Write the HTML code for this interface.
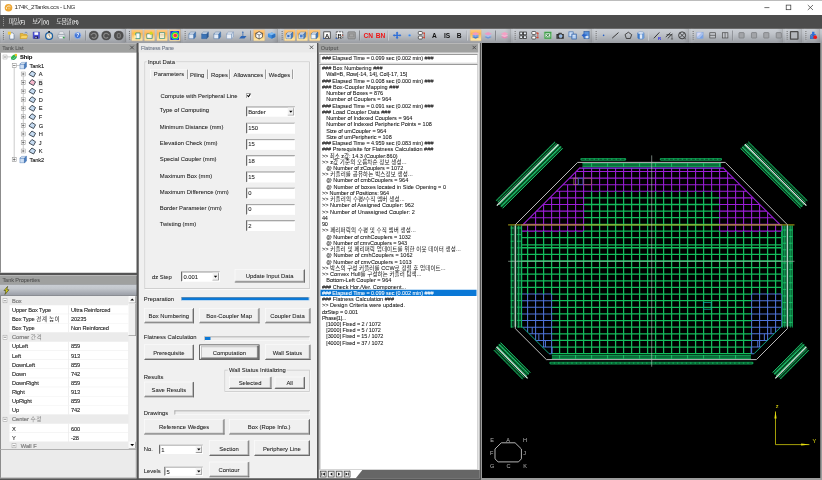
<!DOCTYPE html><html lang="ko"><head><meta charset="utf-8"><title>174K_2Tanks.ccs - LNG</title>
<style>html,body{width:822px;height:480px;overflow:hidden;background:#f0f0f0}
#sc{left:0;top:0;width:3288px;height:1920px;transform:scale(0.25);transform-origin:0 0;isolation:isolate;filter:grayscale(0)}

*{box-sizing:border-box;margin:0;padding:0}
#zm{left:0;top:0;width:3288px;height:1920px;overflow:hidden}
body{position:relative;-webkit-text-stroke:0.24px;font-family:"Liberation Sans","Noto Sans CJK KR",sans-serif;font-size:23.6px;color:#000}
div,svg,button,input{position:absolute}
button,input{font-family:inherit;margin:0;padding:0;border-radius:0;outline:0;-webkit-appearance:none;appearance:none;display:block;-webkit-text-stroke:inherit}
.t{white-space:pre;overflow:visible}
.k{font-size:1em;font-weight:400;-webkit-text-stroke:0}
.s .k{letter-spacing:1.8px}
.f{font-size:23.48px;color:#1a1a1a}
.o{font-size:22px;color:#111;letter-spacing:-0.4px}
.s{font-size:22.8px;color:#1a1a1a;letter-spacing:-0.48px;-webkit-text-stroke:0.4px}
.btn{padding-top:3.6px;background:#f0f0f0;border:2.4px solid #fff;border-right:4px solid #6c6c6c;border-bottom:4px solid #6c6c6c;box-shadow:inset -2.8px -2.8px 0 #a6a6a6;text-align:center;font-size:23.48px;color:#1a1a1a;white-space:pre}
.inp{background:#fff;border:2.8px solid #fff;border-top:3.6px solid #8a8a8a;border-left:4px solid #6a6a6a;box-shadow:inset 2.4px 2.4px 0 #c8c8c8;font-size:23.48px;color:#1a1a1a;white-space:pre;padding-left:5.2px}
.h{font-size:22px;color:#505050}
.hdr{background:#9fa09f;color:#505050;font-size:21.6px;white-space:pre;padding-left:5.2px}
</style></head><body><div id="sc"><div id="zm">
<div  style="left:0px;top:0px;width:3288px;height:60px;background:#fff;border-top:3.6px solid #a6a6a6;border-left:3.6px solid #9a9aa2;"></div>
<svg style="left:16px;top:12.8px" width="36" height="36" viewBox="0 0 9 9"><circle cx="4.5" cy="4.5" r="3.8" fill="#eda634"/><path d="M6.5 3.5A2.3 2.3 0 0 0 2.6 5.8" fill="none" stroke="#fff3dc" stroke-width=".9"/><circle cx="5" cy="5.3" r="1.1" fill="#f4c060"/></svg>
<div class="t" style="left:58.4px;top:8.4px;height:40px;line-height:40px;font-size:24.8px;color:#2c2c2c;letter-spacing:-1.2px;-webkit-text-stroke:0">174K_2Tanks.ccs - LNG</div>
<svg style="left:3040px;top:0" width="248" height="60" viewBox="0 0 62 15"><path d="M4.4 7.6h5" stroke="#333" stroke-width=".7" fill="none"/><rect x="26.2" y="5.1" width="4.6" height="4.6" fill="none" stroke="#333" stroke-width=".7"/><path d="M47.8 5l5.2 5M53 5l-5.2 5" stroke="#333" stroke-width=".7" fill="none"/></svg>
<div  style="left:0px;top:60px;width:3288px;height:52px;background:#4c4c4c"></div>
<svg style="left:8px;top:68px" width="12" height="40" viewBox="0 0 3 10"><path d="M1.5 0.3v9.6" stroke="#bdbdbd" stroke-width=".9" stroke-dasharray=".8 1.2"/></svg>
<div class="t" style="left:34px;top:65.6px;height:40px;line-height:40px;font-size:25.2px;color:#fff;letter-spacing:-3px"><span style="font-weight:300">파일</span><span style="font-size:18.8px;letter-spacing:-0.2px;margin-left:2.8px">(F)</span></div>
<div class="t" style="left:128.8px;top:65.6px;height:40px;line-height:40px;font-size:25.2px;color:#fff;letter-spacing:-3px"><span style="font-weight:300">보기</span><span style="font-size:18.8px;letter-spacing:-0.2px;margin-left:2.8px">(V)</span></div>
<div class="t" style="left:224.8px;top:65.6px;height:40px;line-height:40px;font-size:25.2px;color:#fff;letter-spacing:-3px"><span style="font-weight:300">도움말</span><span style="font-size:18.8px;letter-spacing:-0.2px;margin-left:2.8px">(H)</span></div>
<div  style="left:0px;top:112px;width:3288px;height:60px;background:linear-gradient(#c9cdd3 0%,#c2c6cc 30%,#a9adb3 75%,#9a9da3 100%);border-top:4px solid #6b6b6b"></div>
<div  style="left:4px;top:113.2px;width:500px;height:57.6px;border-radius:0 6px 6px 0;background:linear-gradient(90deg,rgba(255,255,255,.10) 0,rgba(255,255,255,0) 16px,rgba(0,0,0,0) calc(100% - 20px),rgba(0,0,0,.10) 100%);border-right:4px solid rgba(80,80,80,.35)"></div>
<svg style="left:9.2px;top:122px" width="12" height="40" viewBox="0 0 3 10"><path d="M1.2 .5v9" stroke="#666" stroke-width="1" stroke-dasharray="1 1.1"/><path d="M2 1v9" stroke="#e8e8e8" stroke-width=".6" stroke-dasharray="1 1.1" opacity=".7"/></svg>
<div  style="left:508px;top:113.2px;width:217.6px;height:57.6px;border-radius:0 6px 6px 0;background:linear-gradient(90deg,rgba(255,255,255,.10) 0,rgba(255,255,255,0) 16px,rgba(0,0,0,0) calc(100% - 20px),rgba(0,0,0,.10) 100%);border-right:4px solid rgba(80,80,80,.35)"></div>
<svg style="left:513.2px;top:122px" width="12" height="40" viewBox="0 0 3 10"><path d="M1.2 .5v9" stroke="#666" stroke-width="1" stroke-dasharray="1 1.1"/><path d="M2 1v9" stroke="#e8e8e8" stroke-width=".6" stroke-dasharray="1 1.1" opacity=".7"/></svg>
<div  style="left:730.4px;top:113.2px;width:382.8px;height:57.6px;border-radius:0 6px 6px 0;background:linear-gradient(90deg,rgba(255,255,255,.10) 0,rgba(255,255,255,0) 16px,rgba(0,0,0,0) calc(100% - 20px),rgba(0,0,0,.10) 100%);border-right:4px solid rgba(80,80,80,.35)"></div>
<svg style="left:735.6px;top:122px" width="12" height="40" viewBox="0 0 3 10"><path d="M1.2 .5v9" stroke="#666" stroke-width="1" stroke-dasharray="1 1.1"/><path d="M2 1v9" stroke="#e8e8e8" stroke-width=".6" stroke-dasharray="1 1.1" opacity=".7"/></svg>
<div  style="left:1118.4px;top:113.2px;width:927.2px;height:57.6px;border-radius:0 6px 6px 0;background:linear-gradient(90deg,rgba(255,255,255,.10) 0,rgba(255,255,255,0) 16px,rgba(0,0,0,0) calc(100% - 20px),rgba(0,0,0,.10) 100%);border-right:4px solid rgba(80,80,80,.35)"></div>
<svg style="left:1123.6px;top:122px" width="12" height="40" viewBox="0 0 3 10"><path d="M1.2 .5v9" stroke="#666" stroke-width="1" stroke-dasharray="1 1.1"/><path d="M2 1v9" stroke="#e8e8e8" stroke-width=".6" stroke-dasharray="1 1.1" opacity=".7"/></svg>
<div  style="left:2050.4px;top:113.2px;width:319.2px;height:57.6px;border-radius:0 6px 6px 0;background:linear-gradient(90deg,rgba(255,255,255,.10) 0,rgba(255,255,255,0) 16px,rgba(0,0,0,0) calc(100% - 20px),rgba(0,0,0,.10) 100%);border-right:4px solid rgba(80,80,80,.35)"></div>
<svg style="left:2055.6px;top:122px" width="12" height="40" viewBox="0 0 3 10"><path d="M1.2 .5v9" stroke="#666" stroke-width="1" stroke-dasharray="1 1.1"/><path d="M2 1v9" stroke="#e8e8e8" stroke-width=".6" stroke-dasharray="1 1.1" opacity=".7"/></svg>
<div  style="left:2374.4px;top:113.2px;width:383.2px;height:57.6px;border-radius:0 6px 6px 0;background:linear-gradient(90deg,rgba(255,255,255,.10) 0,rgba(255,255,255,0) 16px,rgba(0,0,0,0) calc(100% - 20px),rgba(0,0,0,.10) 100%);border-right:4px solid rgba(80,80,80,.35)"></div>
<svg style="left:2379.6px;top:122px" width="12" height="40" viewBox="0 0 3 10"><path d="M1.2 .5v9" stroke="#666" stroke-width="1" stroke-dasharray="1 1.1"/><path d="M2 1v9" stroke="#e8e8e8" stroke-width=".6" stroke-dasharray="1 1.1" opacity=".7"/></svg>
<div  style="left:2762.4px;top:113.2px;width:372px;height:57.6px;border-radius:0 6px 6px 0;background:linear-gradient(90deg,rgba(255,255,255,.10) 0,rgba(255,255,255,0) 16px,rgba(0,0,0,0) calc(100% - 20px),rgba(0,0,0,.10) 100%);border-right:4px solid rgba(80,80,80,.35)"></div>
<svg style="left:2767.6px;top:122px" width="12" height="40" viewBox="0 0 3 10"><path d="M1.2 .5v9" stroke="#666" stroke-width="1" stroke-dasharray="1 1.1"/><path d="M2 1v9" stroke="#e8e8e8" stroke-width=".6" stroke-dasharray="1 1.1" opacity=".7"/></svg>
<div  style="left:3138.4px;top:113.2px;width:71.2px;height:57.6px;border-radius:0 6px 6px 0;background:linear-gradient(90deg,rgba(255,255,255,.10) 0,rgba(255,255,255,0) 16px,rgba(0,0,0,0) calc(100% - 20px),rgba(0,0,0,.10) 100%);border-right:4px solid rgba(80,80,80,.35)"></div>
<svg style="left:3143.6px;top:122px" width="12" height="40" viewBox="0 0 3 10"><path d="M1.2 .5v9" stroke="#666" stroke-width="1" stroke-dasharray="1 1.1"/><path d="M2 1v9" stroke="#e8e8e8" stroke-width=".6" stroke-dasharray="1 1.1" opacity=".7"/></svg>
<div  style="left:3213.6px;top:113.2px;width:68.8px;height:57.6px;border-radius:0 6px 6px 0;background:linear-gradient(90deg,rgba(255,255,255,.10) 0,rgba(255,255,255,0) 16px,rgba(0,0,0,0) calc(100% - 20px),rgba(0,0,0,.10) 100%);border-right:4px solid rgba(80,80,80,.35)"></div>
<svg style="left:3218.8px;top:122px" width="12" height="40" viewBox="0 0 3 10"><path d="M1.2 .5v9" stroke="#666" stroke-width="1" stroke-dasharray="1 1.1"/><path d="M2 1v9" stroke="#e8e8e8" stroke-width=".6" stroke-dasharray="1 1.1" opacity=".7"/></svg>
<svg style="left:27.6px;top:123.6px" width="36" height="36" viewBox="0 0 10 10"><path d="M3 2h3.2l1.6 1.6V9H3z" fill="#f4f7fb" stroke="#5a7190" stroke-width=".7"/><rect x="1" y="0.8" width="3.4" height="3.2" fill="#f3c93a"/></svg>
<svg style="left:76.8px;top:123.2px" width="36.8" height="36.8" viewBox="0 0 10 10"><path d="M1 3h3l.8.9H8V8.4H1z" fill="#e9b93a" stroke="#b98a1b" stroke-width=".5"/><path d="M1 8.4l1.4-3.2h7L8 8.4z" fill="#f8d566" stroke="#c39322" stroke-width=".4"/><path d="M6 2.2c1.3-.9 2.4-.5 2.8.6" fill="none" stroke="#4c78b8" stroke-width=".8"/></svg>
<svg style="left:128.4px;top:124.4px" width="34.4" height="34.4" viewBox="0 0 10 10"><rect x="1.2" y="1.2" width="7.6" height="7.6" fill="#4a50d4" stroke="#3a3ea8" stroke-width=".5"/><rect x="2.8" y="1.5" width="4.4" height="3" fill="#fff"/><rect x="3" y="6.2" width="4" height="2.6" fill="#1c1c50"/><rect x="4" y="6.8" width="1.3" height="1.6" fill="#dfe4f5"/></svg>
<svg style="left:178px;top:123.2px" width="36.8" height="36.8" viewBox="0 0 10 10"><circle cx="5" cy="5.7" r="3.7" fill="#fff" stroke="#1f5f9e" stroke-width="1.5"/><rect x="4" y="0.3" width="2" height="1.6" fill="#222"/><path d="M5 5.7V3.6M5 5.7l1.4 1" stroke="#333" stroke-width=".6" fill="none"/><circle cx="5" cy="5.7" r="2.2" fill="none" stroke="#d8a23a" stroke-width=".4"/></svg>
<svg style="left:226.8px;top:123.2px" width="36.8" height="36.8" viewBox="0 0 10 10"><path d="M3 1.4h4.2l.8 2.2H2.2z" fill="#fff" stroke="#8a93a2" stroke-width=".5"/><path d="M1.2 4h7.6v3.6H1.2z" fill="#d9dde4" stroke="#7c8695" stroke-width=".5"/><path d="M2.4 6.4h5.2v2.2H2.4z" fill="#f6f7f9" stroke="#8a93a2" stroke-width=".4"/><rect x="6.6" y="6.6" width="1.8" height="1.6" fill="#2eae3e"/></svg>
<div  style="left:276.4px;top:122px;width:4.4px;height:40px;background:linear-gradient(90deg,#85888d 50%,#c9ccd1 50%)"></div>
<svg style="left:293.6px;top:124.8px" width="33.6" height="33.6" viewBox="0 0 10 10"><circle cx="5" cy="5" r="3.9" fill="#3f74d6" stroke="#a9c3f0" stroke-width=".8"/><text x="5" y="7.2" font-family="Liberation Sans,sans-serif" font-size="6" font-weight="bold" fill="#fff" text-anchor="middle">?</text></svg>
<div  style="left:340.8px;top:122px;width:4.4px;height:40px;background:linear-gradient(90deg,#85888d 50%,#c9ccd1 50%)"></div>
<svg style="left:354.8px;top:121.6px" width="40" height="40" viewBox="0 0 10 10"><circle cx="5" cy="5" r="4.6" fill="#505050" stroke="#3a3a3a" stroke-width=".5"/><path d="M3.2 6.6A2.4 2.4 0 1 0 3.4 3.6" fill="none" stroke="#8c8c8c" stroke-width="1.1"/><path d="M2.2 3l1.6 1.6-2 .4z" fill="#8c8c8c"/></svg>
<svg style="left:404.8px;top:121.6px" width="40" height="40" viewBox="0 0 10 10"><circle cx="5" cy="5" r="4.6" fill="#505050" stroke="#3a3a3a" stroke-width=".5"/><path d="M6.8 6.6A2.4 2.4 0 1 1 6.6 3.6" fill="none" stroke="#8c8c8c" stroke-width="1.1"/><path d="M7.8 3l-1.6 1.6 2 .4z" fill="#8c8c8c"/></svg>
<svg style="left:454.8px;top:121.6px" width="40" height="40" viewBox="0 0 10 10"><circle cx="5" cy="5" r="4.6" fill="#505050" stroke="#3a3a3a" stroke-width=".5"/><rect x="3.5" y="3.2" width="3" height="4" rx=".6" fill="none" stroke="#8c8c8c" stroke-width=".9"/></svg>
<div  style="left:525.2px;top:118px;width:46.4px;height:46px;background:linear-gradient(#fdcd88 0%,#fcb555 36%,#fed27c 66%,#ffedb2 100%);border:1.6px solid #e8b060;border-radius:3.2px"></div>
<svg style="left:530px;top:123.2px" width="36.8" height="36.8" viewBox="0 0 10 10"><rect x="1.4" y="1.2" width="3" height="2.6" fill="#f6cf3c"/><path d="M3.6 2.4h4.6v6.2H3.6z" fill="#f7faf8" stroke="#2f8a78" stroke-width=".9"/><rect x="1.8" y="5" width="2" height="3" fill="#fbe9a0"/></svg>
<div  style="left:576px;top:118px;width:44.4px;height:46px;background:linear-gradient(#fdcd88 0%,#fcb555 36%,#fed27c 66%,#ffedb2 100%);border:1.6px solid #e8b060;border-radius:3.2px"></div>
<svg style="left:579.8px;top:123.2px" width="36.8" height="36.8" viewBox="0 0 10 10"><path d="M2 3.4h5.8v5H2z" fill="#fbeedd" stroke="#2f8a78" stroke-width=".8"/><circle cx="6.6" cy="2.6" r="1.7" fill="#d8d820"/><path d="M2.6 4h2.6v3.2H2.6z" fill="#fff"/></svg>
<div  style="left:625.6px;top:118px;width:45.2px;height:46px;background:linear-gradient(#fdcd88 0%,#fcb555 36%,#fed27c 66%,#ffedb2 100%);border:1.6px solid #e8b060;border-radius:3.2px"></div>
<svg style="left:629.8px;top:123.2px" width="36.8" height="36.8" viewBox="0 0 10 10"><path d="M2.2 2h5.6v6.4H2.2z" fill="#fdf3dc" stroke="#3d8f7c" stroke-width=".8"/><path d="M3 4h4M3 5.6h4" stroke="#c7b27a" stroke-width=".5"/></svg>
<div  style="left:676px;top:118px;width:46px;height:46px;background:linear-gradient(#fdcd88 0%,#fcb555 36%,#fed27c 66%,#ffedb2 100%);border:1.6px solid #e8b060;border-radius:3.2px"></div>
<svg style="left:679px;top:121.6px" width="40" height="40" viewBox="0 0 10 10"><rect x=".6" y=".6" width="8.8" height="8.8" fill="#1a2ad8"/><circle cx="5.3" cy="5" r="4.3" fill="#18b4e8"/><circle cx="5.3" cy="5" r="3.5" fill="#22d33a"/><circle cx="5.4" cy="5" r="2.6" fill="#f4e420"/><circle cx="5.5" cy="5" r="1.8" fill="#f0286a"/></svg>
<svg style="left:751.2px;top:123.2px" width="36.8" height="36.8" viewBox="0 0 10 10"><path d="M1.2 3.4h5.4v5.2H1.2z" fill="#dfe9f6" stroke="#3a669c" stroke-width=".5"/><path d="M1.2 3.4l2-1.9h5.4l-2 1.9z" fill="#eef4fb" stroke="#3a669c" stroke-width=".5"/><path d="M6.6 3.4l2-1.9v5.2l-2 1.9z" fill="#3f78bc" stroke="#3a669c" stroke-width=".5"/></svg>
<svg style="left:801.6px;top:123.2px" width="36.8" height="36.8" viewBox="0 0 10 10"><path d="M1.2 3.4h5.4v5.2H1.2z" fill="#3c74b8" stroke="#3a669c" stroke-width=".5"/><path d="M1.2 3.4l2-1.9h5.4l-2 1.9z" fill="#e8f0fa" stroke="#3a669c" stroke-width=".5"/><path d="M6.6 3.4l2-1.9v5.2l-2 1.9z" fill="#2a5a98" stroke="#3a669c" stroke-width=".5"/></svg>
<svg style="left:851.2px;top:123.2px" width="36.8" height="36.8" viewBox="0 0 10 10"><path d="M1.2 3.4h5.4v5.2H1.2z" fill="#e4ecf7" stroke="#3a669c" stroke-width=".5"/><path d="M1.2 3.4l2-1.9h5.4l-2 1.9z" fill="#f4f8fc" stroke="#3a669c" stroke-width=".5"/><path d="M6.6 3.4l2-1.9v5.2l-2 1.9z" fill="#3f78bc" stroke="#3a669c" stroke-width=".5"/></svg>
<svg style="left:901.6px;top:123.2px" width="36.8" height="36.8" viewBox="0 0 10 10"><path d="M1.2 3.4h5.4v5.2H1.2z" fill="#eef3fa" stroke="#6b8ab4" stroke-width=".5"/><path d="M1.2 3.4l2-1.9h5.4l-2 1.9z" fill="#f7fafd" stroke="#6b8ab4" stroke-width=".5"/><path d="M6.6 3.4l2-1.9v5.2l-2 1.9z" fill="#d2dff0" stroke="#6b8ab4" stroke-width=".5"/></svg>
<svg style="left:952.8px;top:123.2px" width="36.8" height="36.8" viewBox="0 0 10 10"><path d="M1 8.4l2.2-2.6h5.8L6.8 8.4z" fill="#2f66b4"/><path d="M5 6.6V1" stroke="#2f66b4" stroke-width=".8"/><path d="M4.2 2.2L5 .6l.8 1.6z" fill="#2f66b4"/></svg>
<div  style="left:1000.4px;top:122px;width:4.4px;height:40px;background:linear-gradient(90deg,#85888d 50%,#c9ccd1 50%)"></div>
<div  style="left:1013.2px;top:118px;width:46.8px;height:46px;background:linear-gradient(#fdcd88 0%,#fcb555 36%,#fed27c 66%,#ffedb2 100%);border:1.6px solid #e8b060;border-radius:3.2px"></div>
<svg style="left:1018.4px;top:123.2px" width="36.8" height="36.8" viewBox="0 0 10 10"><path d="M5 1l3.6 1.8v4.2L5 9 1.4 7V2.8z" fill="#fff" stroke="#222" stroke-width=".7"/><path d="M1.4 2.8L5 4.6l3.6-1.8M5 4.6V9" fill="none" stroke="#222" stroke-width=".6"/></svg>
<svg style="left:1068px;top:123.2px" width="36.8" height="36.8" viewBox="0 0 10 10"><path d="M1 3.2l4.4-1.4 3.6 1.4v3.6L5 8.6 1 6.8z" fill="#3f8fe0"/><path d="M1 3.2l4 1.6 4-1.6-3.6-1.4z" fill="#7fbaf2"/><path d="M5 4.8v3.8l4-1.8V3.2z" fill="#2a6fc0"/></svg>
<div  style="left:1136px;top:118px;width:45.2px;height:46px;background:linear-gradient(#fdcd88 0%,#fcb555 36%,#fed27c 66%,#ffedb2 100%);border:1.6px solid #e8b060;border-radius:3.2px"></div>
<svg style="left:1140.2px;top:123.2px" width="36.8" height="36.8" viewBox="0 0 10 10"><path d="M1.2 3.4h5.4v5.2H1.2z" fill="#f2f6fb" stroke="#3a669c" stroke-width=".5"/><path d="M1.2 3.4l2-1.9h5.4l-2 1.9z" fill="#f9fbfe" stroke="#3a669c" stroke-width=".5"/><path d="M6.6 3.4l2-1.9v5.2l-2 1.9z" fill="#4a7fc0" stroke="#3a669c" stroke-width=".5"/><rect x="2.4" y="4.6" width="2.6" height="2.6" fill="#3b6fc0"/></svg>
<div  style="left:1186.4px;top:118px;width:45.6px;height:46px;background:linear-gradient(#fdcd88 0%,#fcb555 36%,#fed27c 66%,#ffedb2 100%);border:1.6px solid #e8b060;border-radius:3.2px"></div>
<svg style="left:1190.8px;top:123.2px" width="36.8" height="36.8" viewBox="0 0 10 10"><path d="M1.2 3.4h5.4v5.2H1.2z" fill="#f2f6fb" stroke="#3a669c" stroke-width=".5"/><path d="M1.2 3.4l2-1.9h5.4l-2 1.9z" fill="#f9fbfe" stroke="#3a669c" stroke-width=".5"/><path d="M6.6 3.4l2-1.9v5.2l-2 1.9z" fill="#4a7fc0" stroke="#3a669c" stroke-width=".5"/><path d="M2.4 4.4h3v3h-3z" fill="#4a7fd0"/></svg>
<div  style="left:1235.6px;top:118px;width:45.2px;height:46px;background:linear-gradient(#fdcd88 0%,#fcb555 36%,#fed27c 66%,#ffedb2 100%);border:1.6px solid #e8b060;border-radius:3.2px"></div>
<svg style="left:1239.8px;top:123.2px" width="36.8" height="36.8" viewBox="0 0 10 10"><path d="M1.2 3.4h5.4v5.2H1.2z" fill="#f2f6fb" stroke="#3a669c" stroke-width=".5"/><path d="M1.2 3.4l2-1.9h5.4l-2 1.9z" fill="#f9fbfe" stroke="#3a669c" stroke-width=".5"/><path d="M6.6 3.4l2-1.9v5.2l-2 1.9z" fill="#3f78bc" stroke="#3a669c" stroke-width=".5"/></svg>
<svg style="left:1289.6px;top:123.2px" width="36.8" height="36.8" viewBox="0 0 10 10"><rect x="1.4" y="1.2" width="7" height="7" fill="#fff" stroke="#2b2b2b" stroke-width=".8"/><text x="4.9" y="7.4" font-family="Liberation Sans,sans-serif" font-size="6.4" font-weight="bold" fill="#111" text-anchor="middle">A</text><circle cx="1.4" cy="8.4" r=".8" fill="#2a62c8"/></svg>
<svg style="left:1339.6px;top:123.2px" width="36.8" height="36.8" viewBox="0 0 10 10"><rect x="1.4" y="1.2" width="7" height="7" fill="#fff" stroke="#2b2b2b" stroke-width=".8" stroke-dasharray="2 1"/><text x="4.9" y="7.4" font-family="Liberation Sans,sans-serif" font-size="6.4" font-weight="bold" fill="#111" text-anchor="middle">B</text><circle cx="1.4" cy="8.4" r=".8" fill="#2a62c8"/><circle cx="8.4" cy="5" r=".7" fill="#c8442a"/></svg>
<svg style="left:1387.6px;top:123.2px" width="36.8" height="36.8" viewBox="0 0 10 10"><rect x="1" y="1.2" width="8" height="7.6" rx=".8" fill="#a6a6a6" stroke="#6a6a6a" stroke-width=".7"/><path d="M2.6 3.4h4.8v3.2H2.6z" fill="none" stroke="#7d7d7d" stroke-width=".6"/></svg>
<div  style="left:1436.4px;top:122px;width:4.4px;height:40px;background:linear-gradient(90deg,#85888d 50%,#c9ccd1 50%)"></div>
<svg style="left:1452.8px;top:121.6px" width="40" height="40" viewBox="0 0 10 10"><text x="5" y="7.3" font-family="Liberation Sans,sans-serif" font-size="6.6" font-weight="bold" fill="#f01414" text-anchor="middle">CN</text></svg>
<svg style="left:1502.4px;top:121.6px" width="40" height="40" viewBox="0 0 10 10"><text x="5" y="7.3" font-family="Liberation Sans,sans-serif" font-size="6.6" font-weight="bold" fill="#f01414" text-anchor="middle">BN</text></svg>
<div  style="left:1551.2px;top:122px;width:4.4px;height:40px;background:linear-gradient(90deg,#85888d 50%,#c9ccd1 50%)"></div>
<svg style="left:1569.6px;top:123.2px" width="36.8" height="36.8" viewBox="0 0 10 10"><path d="M5 .8l1.6 2H5.8v1.6h2V3.4l2 1.6-2 1.6V5.6h-2v1.6h.8L5 9.2 3.4 7.2h.8V5.6h-2v1L.2 5l2-1.6v1h2V2.8h-.8z" fill="#2f6fd8"/></svg>
<svg style="left:1620px;top:123.2px" width="36.8" height="36.8" viewBox="0 0 10 10"><circle cx="5" cy="5" r="1.3" fill="#3b86e6" stroke="#9cc2f2" stroke-width=".5"/></svg>
<svg style="left:1668.4px;top:123.2px" width="36.8" height="36.8" viewBox="0 0 10 10"><rect x="1.4" y=".8" width="4.4" height="3.2" rx="1" fill="#fff" stroke="#333" stroke-width=".8"/><rect x="1.4" y="5.8" width="4.4" height="3.2" rx="1" fill="#fff" stroke="#333" stroke-width=".8"/><path d="M6 2.4h2v5H6" fill="none" stroke="#c83a2a" stroke-width=".8"/><circle cx="8" cy="2.6" r=".8" fill="#d8402a"/><circle cx="8" cy="7.6" r=".8" fill="#d8402a"/></svg>
<svg style="left:1718px;top:121.6px" width="40" height="40" viewBox="0 0 10 10"><text x="5" y="7.3" font-family="Liberation Sans,sans-serif" font-size="6.6" font-weight="bold" fill="#111" text-anchor="middle">A</text></svg>
<svg style="left:1767.6px;top:121.6px" width="40" height="40" viewBox="0 0 10 10"><text x="5" y="7.3" font-family="Liberation Sans,sans-serif" font-size="6.6" font-weight="bold" fill="#111" text-anchor="middle">IS</text></svg>
<svg style="left:1816.8px;top:121.6px" width="40" height="40" viewBox="0 0 10 10"><text x="5" y="7.3" font-family="Liberation Sans,sans-serif" font-size="6.6" font-weight="bold" fill="#111" text-anchor="middle">B</text></svg>
<div  style="left:1867.2px;top:122px;width:4.4px;height:40px;background:linear-gradient(90deg,#85888d 50%,#c9ccd1 50%)"></div>
<div  style="left:1879.6px;top:118px;width:46px;height:46px;background:linear-gradient(#fdcd88 0%,#fcb555 36%,#fed27c 66%,#ffedb2 100%);border:1.6px solid #e8b060;border-radius:3.2px"></div>
<svg style="left:1884px;top:123.2px" width="36.8" height="36.8" viewBox="0 0 10 10"><path d="M5 5.2l4 1.7-4 1.9-4-1.9z" fill="#4a80d0"/><path d="M5 3.4l4 1.7-4 1.9-4-1.9z" fill="#7aa6e8"/><path d="M5 1.4l4 1.8-4 1.9-4-1.9z" fill="#f29ac0"/></svg>
<svg style="left:1933.6px;top:123.2px" width="36.8" height="36.8" viewBox="0 0 10 10"><path d="M5 5.2l4 1.7-4 1.9-4-1.9z" fill="#6c96d8"/><path d="M5 3.4l4 1.7-4 1.9-4-1.9z" fill="#a8c0ea"/><path d="M5 1.4l4 1.8-4 1.9-4-1.9z" fill="#ee9ac4"/></svg>
<div  style="left:1980.4px;top:122px;width:4.4px;height:40px;background:linear-gradient(90deg,#85888d 50%,#c9ccd1 50%)"></div>
<svg style="left:1999.6px;top:123.2px" width="36.8" height="36.8" viewBox="0 0 10 10"><path d="M5 5.2l4 1.7-4 1.9-4-1.9z" fill="#e888b4"/><path d="M5 3.4l4 1.7-4 1.9-4-1.9z" fill="#f0b8d4"/><path d="M5 1.4l4 1.8-4 1.9-4-1.9z" fill="#f4a0c4"/></svg>
<svg style="left:2074.8px;top:124.4px" width="34.4" height="34.4" viewBox="0 0 10 10"><g fill="#eef4fb" stroke="#2a2a2a" stroke-width=".9"><rect x="1.2" y="1.2" width="3.2" height="3.2"/><rect x="5.6" y="1.2" width="3.2" height="3.2"/><rect x="1.2" y="5.6" width="3.2" height="3.2"/><rect x="5.6" y="5.6" width="3.2" height="3.2"/></g></svg>
<svg style="left:2121.6px;top:123.2px" width="36.8" height="36.8" viewBox="0 0 10 10"><rect x="1.4" y=".8" width="4.4" height="3.2" rx="1" fill="#fff" stroke="#333" stroke-width=".8"/><rect x="1.4" y="5.8" width="4.4" height="3.2" rx="1" fill="#fff" stroke="#333" stroke-width=".8"/><path d="M6 2.4h2v5H6" fill="none" stroke="#c83a2a" stroke-width=".8"/><circle cx="8" cy="2.6" r=".8" fill="#d8402a"/><circle cx="8" cy="7.6" r=".8" fill="#d8402a"/></svg>
<svg style="left:2172.8px;top:123.2px" width="36.8" height="36.8" viewBox="0 0 10 10"><rect x="1" y="1" width="8" height="8" rx=".6" fill="#3a9a44" stroke="#9ed0a2" stroke-width=".6"/><rect x="2.4" y="2.8" width="5.2" height="4.4" fill="#e9f5ea"/><path d="M3.4 3.4l3.2 3.2M6.6 3.4L3.4 6.6" stroke="#1f6e2a" stroke-width="1"/></svg>
<svg style="left:2221.6px;top:123.2px" width="36.8" height="36.8" viewBox="0 0 10 10"><path d="M1 3.6h8v5H1z" fill="#2b2b2b"/><path d="M3.4 2.2h3.2l.6 1.4H2.8z" fill="#444"/><circle cx="5.6" cy="5.8" r="1.8" fill="#8fb6e6" stroke="#cfe0f5" stroke-width=".5"/><path d="M1.8 5v3" stroke="#777" stroke-width=".6"/></svg>
<svg style="left:2272px;top:123.2px" width="36.8" height="36.8" viewBox="0 0 10 10"><rect x="1" y="1.2" width="4.6" height="5.4" fill="#cfe0f6" stroke="#3468b0" stroke-width=".7"/><rect x="4.2" y="3.6" width="4.8" height="5.4" fill="#9fc0ea" stroke="#2a5aa0" stroke-width=".7"/><path d="M5.2 5.2h2.8M5.2 6.8h2.8" stroke="#fff" stroke-width=".6"/></svg>
<svg style="left:2324.4px;top:123.2px" width="36.8" height="36.8" viewBox="0 0 10 10"><rect x="3.2" y="1" width="5.6" height="7.6" fill="#5c94dc" stroke="#2a5aa0" stroke-width=".7"/><path d="M.6 5l3-2.4v1.6h2.6v1.8H3.6v1.6z" fill="#2a62c8"/><rect x="5" y="5.6" width="3" height="2.6" fill="#dbe8f8"/></svg>
<svg style="left:2395.6px;top:123.2px" width="36.8" height="36.8" viewBox="0 0 10 10"><circle cx="5" cy="5" r=".9" fill="#1c5cc8"/></svg>
<svg style="left:2443.2px;top:123.2px" width="36.8" height="36.8" viewBox="0 0 10 10"><path d="M1.6 8l6.8-6" stroke="#2b2b2b" stroke-width="1"/></svg>
<svg style="left:2495.2px;top:123.2px" width="36.8" height="36.8" viewBox="0 0 10 10"><path d="M5 1.6l3.6 2.6-1.4 4.2H2.8L1.4 4.2z" fill="none" stroke="#2b2b2b" stroke-width=".9"/></svg>
<svg style="left:2544.8px;top:123.2px" width="36.8" height="36.8" viewBox="0 0 10 10"><path d="M1.6 2.4v5.4c0 1.6 6.8 1.6 6.8 0V2.4z" fill="#dfeaf8" stroke="#3a70b8" stroke-width=".6"/><path d="M1.6 2.4v5.4c.4 1 1.6 1.2 2.2 1.2V3.2z" fill="#3b78c8"/><path d="M8.4 2.4v5.4c-.4 1-1.4 1.2-2 1.2V3.2z" fill="#6a9ad8"/><ellipse cx="5" cy="2.4" rx="3.4" ry="1.2" fill="#f2f6fc" stroke="#3a70b8" stroke-width=".5"/></svg>
<div  style="left:2592px;top:122px;width:4.4px;height:40px;background:linear-gradient(90deg,#85888d 50%,#c9ccd1 50%)"></div>
<svg style="left:2610.8px;top:123.2px" width="36.8" height="36.8" viewBox="0 0 10 10"><path d="M1.2 8.2l6-6.4" stroke="#2b2b2b" stroke-width="1"/><text x="7.4" y="9.6" font-family="Liberation Sans,sans-serif" font-size="4.6" font-weight="bold" fill="#2a2af0" text-anchor="middle">R</text></svg>
<svg style="left:2660px;top:123.2px" width="36.8" height="36.8" viewBox="0 0 10 10"><path d="M.8 7l5-5M3 8.4l5-5M1.6 4.4h6.4" stroke="#2b2b2b" stroke-width=".9" fill="none"/><path d="M7.6 5v4M6.4 9h2.4" stroke="#444" stroke-width=".7"/></svg>
<svg style="left:2709.6px;top:123.2px" width="36.8" height="36.8" viewBox="0 0 10 10"><circle cx="5" cy="5" r="3.8" fill="none" stroke="#333" stroke-width="1"/><path d="M2.4 2.4l5.2 5.2M7.6 2.4L2.4 7.6" stroke="#333" stroke-width=".9"/><circle cx="8.4" cy="8.6" r=".7" fill="#555"/></svg>
<svg style="left:2782.8px;top:124.4px" width="34.4" height="34.4" viewBox="0 0 10 10"><rect x="1.4" y="1.4" width="7.2" height="7.2" fill="#a9c2ee" stroke="#7fa0d8" stroke-width=".6"/><path d="M1.7 1.7h5.2L1.7 6.9z" fill="#e6e0f4" opacity=".8"/><path d="M8.3 8.3H4.2l4.1-4.1z" fill="#6a98e4" opacity=".8"/></svg>
<svg style="left:2833.6px;top:125.2px" width="32.8" height="32.8" viewBox="0 0 10 10"><rect x="1.6" y="1.8" width="6.8" height="6.4" fill="#c2c5ca" stroke="#444" stroke-width=".8"/><path d="M1.6 5h6.8" stroke="#444" stroke-width=".8"/></svg>
<svg style="left:2883.6px;top:125.2px" width="32.8" height="32.8" viewBox="0 0 10 10"><rect x="1.6" y="1.8" width="6.8" height="6.4" fill="#c2c5ca" stroke="#444" stroke-width=".8"/><path d="M5 1.8v6.4" stroke="#444" stroke-width=".8"/></svg>
<div  style="left:2928.8px;top:122px;width:4.4px;height:40px;background:linear-gradient(90deg,#85888d 50%,#c9ccd1 50%)"></div>
<svg style="left:2950.8px;top:126.4px" width="30.4" height="30.4" viewBox="0 0 10 10"><rect x="1.6" y="1.4" width="6.8" height="7.2" rx=".9" fill="#a2a4a8" stroke="#77797d" stroke-width=".9"/></svg>
<svg style="left:3000.8px;top:126.4px" width="30.4" height="30.4" viewBox="0 0 10 10"><rect x="1.6" y="1.4" width="6.8" height="7.2" rx=".9" fill="#a2a4a8" stroke="#77797d" stroke-width=".9"/></svg>
<svg style="left:3049.6px;top:126.4px" width="30.4" height="30.4" viewBox="0 0 10 10"><rect x="1.6" y="1.4" width="6.8" height="7.2" rx=".9" fill="#a2a4a8" stroke="#77797d" stroke-width=".9"/></svg>
<svg style="left:3099.6px;top:126.4px" width="30.4" height="30.4" viewBox="0 0 10 10"><rect x="1.6" y="1.4" width="6.8" height="7.2" rx=".9" fill="#a2a4a8" stroke="#77797d" stroke-width=".9"/></svg>
<svg style="left:3158.4px;top:122.8px" width="37.6" height="37.6" viewBox="0 0 10 10"><rect x="1" y="1" width="8" height="8" rx=".5" fill="#b4b7bc" stroke="#4a4a4a" stroke-width="1.4"/></svg>
<svg style="left:3234.8px;top:123.2px" width="36.8" height="36.8" viewBox="0 0 10 10"><path d="M3.6 1h2.6v2.4h2L5 6.2 1.6 3.4h2z" fill="#2f6fd8"/><rect x="1.6" y="5.4" width="4" height="3.4" fill="#3c78d8" stroke="#2a5aa0" stroke-width=".4"/><circle cx="7" cy="7" r="2" fill="#f01414"/></svg>
<div  style="left:0px;top:172px;width:3288px;height:1748px;background:#555"></div>
<div class="hdr"  style="left:0px;top:172px;width:546.4px;height:38.4px;border-top:4px solid #b8b8b8"></div>
<div class="t h" style="left:9.2px;top:171.2px;height:40px;line-height:40px;letter-spacing:-0.232px;">Tank List</div>
<svg style="left:515.6px;top:178px" width="24" height="24" viewBox="0 0 6 6"><path d="M1.2 1.2l3.6 3.6M4.8 1.2L1.2 4.8" stroke="#484848" stroke-width=".9"/></svg>
<div  style="left:0px;top:210.4px;width:546.4px;height:880.8px;background:#fff;border-left:4.8px solid #8c8c8c"></div>
<svg style="left:0;top:208px" width="240" height="480" viewBox="0 0 60 120"><g stroke="#b4b4b4" stroke-width=".7" fill="none"><path d="M5 4.9h6"/><path d="M14.2 13.5v94.2h0"/><path d="M14 13.5h6"/><path d="M23.3 22v77.1"/></g></svg>
<svg style="left:10px;top:217.6px" width="20" height="20" viewBox="0 0 5 5"><rect x=".4" y=".4" width="4.2" height="4.2" fill="#fff" stroke="#919191" stroke-width=".6"/><path d="M1.2 2.5h2.6" stroke="#444" stroke-width=".6"/></svg>
<svg style="left:40px;top:210.8px" width="32" height="33.6" viewBox="0 0 8 8.4"><ellipse cx="3.9" cy="4.6" rx="3.1" ry="2.3" transform="rotate(-35 3.9 4.6)" fill="#2cb84e"/><path d="M.9 7.1C2.6 6.9 5.4 4.6 6.6 2.6" stroke="#9ab4d8" stroke-width=".7" fill="none"/><circle cx="5.9" cy="2.3" r="1.2" fill="#e8c020"/></svg>
<div class="t s" style="left:80px;top:207.6px;height:40px;line-height:40px;font-weight:bold;color:#111;font-size:23.6px">Ship</div>
<svg style="left:46.8px;top:251.84px" width="20" height="20" viewBox="0 0 5 5"><rect x=".4" y=".4" width="4.2" height="4.2" fill="#fff" stroke="#919191" stroke-width=".6"/><path d="M1.2 2.5h2.6" stroke="#444" stroke-width=".6"/></svg>
<svg style="left:76.8px;top:245.84px" width="32" height="32" viewBox="0 0 8 8"><path d="M.6 2.6h4.6v4.8H.6z" fill="#cfe0f4" stroke="#4a78b4" stroke-width=".5"/><path d="M.6 2.6L2.6.8h4.6L5.2 2.6z" fill="#eef4fb" stroke="#4a78b4" stroke-width=".5"/><path d="M5.2 2.6L7.2.8v4.8l-2 1.8z" fill="#4a80c4" stroke="#3a68a4" stroke-width=".5"/></svg>
<div class="t s" style="left:117.6px;top:241.84px;height:40px;line-height:40px;">Tank1</div>
<svg style="left:83.2px;top:286.08px" width="20" height="20" viewBox="0 0 5 5"><rect x=".4" y=".4" width="4.2" height="4.2" fill="#fff" stroke="#919191" stroke-width=".6"/><path d="M1.2 2.5h2.6" stroke="#444" stroke-width=".6"/><path d="M2.5 1.2v2.6" stroke="#444" stroke-width=".6"/></svg>
<svg style="left:112.8px;top:280.08px" width="32" height="32" viewBox="0 0 8 8"><path d="M.7 4.5L3.7 1l3.6 2.3L5.3 7z" fill="#c6dcf2" stroke="#26303c" stroke-width=".85" stroke-linejoin="round"/></svg>
<div class="t s" style="left:155.2px;top:276.08px;height:40px;line-height:40px;">A</div>
<svg style="left:83.2px;top:320.32px" width="20" height="20" viewBox="0 0 5 5"><rect x=".4" y=".4" width="4.2" height="4.2" fill="#fff" stroke="#919191" stroke-width=".6"/><path d="M1.2 2.5h2.6" stroke="#444" stroke-width=".6"/><path d="M2.5 1.2v2.6" stroke="#444" stroke-width=".6"/></svg>
<svg style="left:112.8px;top:314.32px" width="32" height="32" viewBox="0 0 8 8"><path d="M.7 4.5L3.7 1l3.6 2.3L5.3 7z" fill="#f6b8cc" stroke="#26303c" stroke-width=".85" stroke-linejoin="round"/></svg>
<div  style="left:150.4px;top:315.92px;width:20.8px;height:29.6px;background:#ededed"></div>
<div class="t s" style="left:155.2px;top:310.32px;height:40px;line-height:40px;">B</div>
<svg style="left:83.2px;top:354.56px" width="20" height="20" viewBox="0 0 5 5"><rect x=".4" y=".4" width="4.2" height="4.2" fill="#fff" stroke="#919191" stroke-width=".6"/><path d="M1.2 2.5h2.6" stroke="#444" stroke-width=".6"/><path d="M2.5 1.2v2.6" stroke="#444" stroke-width=".6"/></svg>
<svg style="left:112.8px;top:348.56px" width="32" height="32" viewBox="0 0 8 8"><path d="M.7 4.5L3.7 1l3.6 2.3L5.3 7z" fill="#c6dcf2" stroke="#26303c" stroke-width=".85" stroke-linejoin="round"/></svg>
<div class="t s" style="left:155.2px;top:344.56px;height:40px;line-height:40px;">C</div>
<svg style="left:83.2px;top:388.8px" width="20" height="20" viewBox="0 0 5 5"><rect x=".4" y=".4" width="4.2" height="4.2" fill="#fff" stroke="#919191" stroke-width=".6"/><path d="M1.2 2.5h2.6" stroke="#444" stroke-width=".6"/><path d="M2.5 1.2v2.6" stroke="#444" stroke-width=".6"/></svg>
<svg style="left:112.8px;top:382.8px" width="32" height="32" viewBox="0 0 8 8"><path d="M.7 4.5L3.7 1l3.6 2.3L5.3 7z" fill="#c6dcf2" stroke="#26303c" stroke-width=".85" stroke-linejoin="round"/></svg>
<div class="t s" style="left:155.2px;top:378.8px;height:40px;line-height:40px;">D</div>
<svg style="left:83.2px;top:423.04px" width="20" height="20" viewBox="0 0 5 5"><rect x=".4" y=".4" width="4.2" height="4.2" fill="#fff" stroke="#919191" stroke-width=".6"/><path d="M1.2 2.5h2.6" stroke="#444" stroke-width=".6"/><path d="M2.5 1.2v2.6" stroke="#444" stroke-width=".6"/></svg>
<svg style="left:112.8px;top:417.04px" width="32" height="32" viewBox="0 0 8 8"><path d="M.7 4.5L3.7 1l3.6 2.3L5.3 7z" fill="#c6dcf2" stroke="#26303c" stroke-width=".85" stroke-linejoin="round"/></svg>
<div class="t s" style="left:155.2px;top:413.04px;height:40px;line-height:40px;">E</div>
<svg style="left:83.2px;top:457.28px" width="20" height="20" viewBox="0 0 5 5"><rect x=".4" y=".4" width="4.2" height="4.2" fill="#fff" stroke="#919191" stroke-width=".6"/><path d="M1.2 2.5h2.6" stroke="#444" stroke-width=".6"/><path d="M2.5 1.2v2.6" stroke="#444" stroke-width=".6"/></svg>
<svg style="left:112.8px;top:451.28px" width="32" height="32" viewBox="0 0 8 8"><path d="M.7 4.5L3.7 1l3.6 2.3L5.3 7z" fill="#c6dcf2" stroke="#26303c" stroke-width=".85" stroke-linejoin="round"/></svg>
<div class="t s" style="left:155.2px;top:447.28px;height:40px;line-height:40px;">F</div>
<svg style="left:83.2px;top:491.52px" width="20" height="20" viewBox="0 0 5 5"><rect x=".4" y=".4" width="4.2" height="4.2" fill="#fff" stroke="#919191" stroke-width=".6"/><path d="M1.2 2.5h2.6" stroke="#444" stroke-width=".6"/><path d="M2.5 1.2v2.6" stroke="#444" stroke-width=".6"/></svg>
<svg style="left:112.8px;top:485.52px" width="32" height="32" viewBox="0 0 8 8"><path d="M.7 4.5L3.7 1l3.6 2.3L5.3 7z" fill="#c6dcf2" stroke="#26303c" stroke-width=".85" stroke-linejoin="round"/></svg>
<div class="t s" style="left:155.2px;top:481.52px;height:40px;line-height:40px;">G</div>
<svg style="left:83.2px;top:525.76px" width="20" height="20" viewBox="0 0 5 5"><rect x=".4" y=".4" width="4.2" height="4.2" fill="#fff" stroke="#919191" stroke-width=".6"/><path d="M1.2 2.5h2.6" stroke="#444" stroke-width=".6"/><path d="M2.5 1.2v2.6" stroke="#444" stroke-width=".6"/></svg>
<svg style="left:112.8px;top:519.76px" width="32" height="32" viewBox="0 0 8 8"><path d="M.7 4.5L3.7 1l3.6 2.3L5.3 7z" fill="#c6dcf2" stroke="#26303c" stroke-width=".85" stroke-linejoin="round"/></svg>
<div class="t s" style="left:155.2px;top:515.76px;height:40px;line-height:40px;">H</div>
<svg style="left:83.2px;top:560px" width="20" height="20" viewBox="0 0 5 5"><rect x=".4" y=".4" width="4.2" height="4.2" fill="#fff" stroke="#919191" stroke-width=".6"/><path d="M1.2 2.5h2.6" stroke="#444" stroke-width=".6"/><path d="M2.5 1.2v2.6" stroke="#444" stroke-width=".6"/></svg>
<svg style="left:112.8px;top:554px" width="32" height="32" viewBox="0 0 8 8"><path d="M.7 4.5L3.7 1l3.6 2.3L5.3 7z" fill="#c6dcf2" stroke="#26303c" stroke-width=".85" stroke-linejoin="round"/></svg>
<div class="t s" style="left:155.2px;top:550px;height:40px;line-height:40px;">J</div>
<svg style="left:83.2px;top:594.24px" width="20" height="20" viewBox="0 0 5 5"><rect x=".4" y=".4" width="4.2" height="4.2" fill="#fff" stroke="#919191" stroke-width=".6"/><path d="M1.2 2.5h2.6" stroke="#444" stroke-width=".6"/><path d="M2.5 1.2v2.6" stroke="#444" stroke-width=".6"/></svg>
<svg style="left:112.8px;top:588.24px" width="32" height="32" viewBox="0 0 8 8"><path d="M.7 4.5L3.7 1l3.6 2.3L5.3 7z" fill="#c6dcf2" stroke="#26303c" stroke-width=".85" stroke-linejoin="round"/></svg>
<div class="t s" style="left:155.2px;top:584.24px;height:40px;line-height:40px;">K</div>
<svg style="left:46.8px;top:628.48px" width="20" height="20" viewBox="0 0 5 5"><rect x=".4" y=".4" width="4.2" height="4.2" fill="#fff" stroke="#919191" stroke-width=".6"/><path d="M1.2 2.5h2.6" stroke="#444" stroke-width=".6"/><path d="M2.5 1.2v2.6" stroke="#444" stroke-width=".6"/></svg>
<svg style="left:76.8px;top:622.48px" width="32" height="32" viewBox="0 0 8 8"><path d="M.6 2.6h4.6v4.8H.6z" fill="#cfe0f4" stroke="#4a78b4" stroke-width=".5"/><path d="M.6 2.6L2.6.8h4.6L5.2 2.6z" fill="#eef4fb" stroke="#4a78b4" stroke-width=".5"/><path d="M5.2 2.6L7.2.8v4.8l-2 1.8z" fill="#4a80c4" stroke="#3a68a4" stroke-width=".5"/></svg>
<div class="t s" style="left:117.6px;top:618.48px;height:40px;line-height:40px;">Tank2</div>
<div class="hdr"  style="left:0px;top:1100px;width:546.4px;height:38.4px;border-top:4px solid #b8b8b8"></div>
<div class="t h" style="left:9.6px;top:1100px;height:40px;line-height:40px;letter-spacing:-0.164px;">Tank Properties</div>
<div  style="left:0px;top:1138px;width:546.4px;height:44.8px;background:linear-gradient(#ccd0d6 0%,#c3c7cd 35%,#a4a8b0 80%,#9a9ea6 100%)"></div>
<svg style="left:12px;top:1144px" width="28" height="36" viewBox="0 0 7 9"><path d="M4.6.4L1 4.6h2L2 8.4l4-4.6H3.8z" fill="#e6e01e" stroke="#3a3a10" stroke-width=".6"/></svg>
<div  style="left:0px;top:1184px;width:546.4px;height:612px;background:#ebebeb;border-left:4.8px solid #8c8c8c"></div>
<div style="left:0;top:1184px;width:514.4px;height:612px;overflow:hidden">
<svg style="left:10px;top:8.68px" width="20" height="20" viewBox="0 0 5 5"><rect x=".4" y=".4" width="4.2" height="4.2" fill="#fff" stroke="#919191" stroke-width=".6"/><path d="M1.2 2.5h2.6" stroke="#444" stroke-width=".6"/></svg>
<div class="t s" style="left:47.6px;top:-1.32px;height:40px;line-height:40px;color:#808080;-webkit-text-stroke:0.88px #808080;letter-spacing:-0.08px">Box</div>
<div  style="left:38.4px;top:36.52px;width:476px;height:36.52px;background:#fff;border-bottom:2.8px solid #ebebeb"></div>
<div  style="left:273.2px;top:36.52px;width:2.8px;height:36.52px;background:#ebebeb"></div>
<div class="t s" style="left:47.6px;top:35.16px;height:40px;line-height:40px;color:#1e1e1e">Upper Box Type</div>
<div class="t s" style="left:284px;top:35.16px;height:40px;line-height:40px;color:#1e1e1e">Ultra Reinforced</div>
<div  style="left:38.4px;top:73.04px;width:476px;height:36.52px;background:#fff;border-bottom:2.8px solid #ebebeb"></div>
<div  style="left:273.2px;top:73.04px;width:2.8px;height:36.52px;background:#ebebeb"></div>
<div class="t s" style="left:47.6px;top:71.72px;height:40px;line-height:40px;color:#1e1e1e">Box Type <span class="k">경계</span> <span class="k">높이</span></div>
<div class="t s" style="left:284px;top:71.72px;height:40px;line-height:40px;color:#1e1e1e">20235</div>
<div  style="left:38.4px;top:109.56px;width:476px;height:36.52px;background:#fff;border-bottom:2.8px solid #ebebeb"></div>
<div  style="left:273.2px;top:109.56px;width:2.8px;height:36.52px;background:#ebebeb"></div>
<div class="t s" style="left:47.6px;top:108.2px;height:40px;line-height:40px;color:#1e1e1e">Box Type</div>
<div class="t s" style="left:284px;top:108.2px;height:40px;line-height:40px;color:#1e1e1e">Non Reinforced</div>
<svg style="left:10px;top:154.76px" width="20" height="20" viewBox="0 0 5 5"><rect x=".4" y=".4" width="4.2" height="4.2" fill="#fff" stroke="#919191" stroke-width=".6"/><path d="M1.2 2.5h2.6" stroke="#444" stroke-width=".6"/></svg>
<div class="t s" style="left:47.6px;top:144.76px;height:40px;line-height:40px;color:#808080;-webkit-text-stroke:0.88px #808080;letter-spacing:-0.08px">Corner <span class="k">간격</span></div>
<div  style="left:38.4px;top:182.6px;width:476px;height:36.52px;background:#fff;border-bottom:2.8px solid #ebebeb"></div>
<div  style="left:273.2px;top:182.6px;width:2.8px;height:36.52px;background:#ebebeb"></div>
<div class="t s" style="left:47.6px;top:181.28px;height:40px;line-height:40px;color:#1e1e1e">UpLeft</div>
<div class="t s" style="left:284px;top:181.28px;height:40px;line-height:40px;color:#1e1e1e">859</div>
<div  style="left:38.4px;top:219.12px;width:476px;height:36.52px;background:#fff;border-bottom:2.8px solid #ebebeb"></div>
<div  style="left:273.2px;top:219.12px;width:2.8px;height:36.52px;background:#ebebeb"></div>
<div class="t s" style="left:47.6px;top:217.8px;height:40px;line-height:40px;color:#1e1e1e">Left</div>
<div class="t s" style="left:284px;top:217.8px;height:40px;line-height:40px;color:#1e1e1e">913</div>
<div  style="left:38.4px;top:255.64px;width:476px;height:36.52px;background:#fff;border-bottom:2.8px solid #ebebeb"></div>
<div  style="left:273.2px;top:255.64px;width:2.8px;height:36.52px;background:#ebebeb"></div>
<div class="t s" style="left:47.6px;top:254.32px;height:40px;line-height:40px;color:#1e1e1e">DownLeft</div>
<div class="t s" style="left:284px;top:254.32px;height:40px;line-height:40px;color:#1e1e1e">859</div>
<div  style="left:38.4px;top:292.16px;width:476px;height:36.52px;background:#fff;border-bottom:2.8px solid #ebebeb"></div>
<div  style="left:273.2px;top:292.16px;width:2.8px;height:36.52px;background:#ebebeb"></div>
<div class="t s" style="left:47.6px;top:290.8px;height:40px;line-height:40px;color:#1e1e1e">Down</div>
<div class="t s" style="left:284px;top:290.8px;height:40px;line-height:40px;color:#1e1e1e">742</div>
<div  style="left:38.4px;top:328.68px;width:476px;height:36.52px;background:#fff;border-bottom:2.8px solid #ebebeb"></div>
<div  style="left:273.2px;top:328.68px;width:2.8px;height:36.52px;background:#ebebeb"></div>
<div class="t s" style="left:47.6px;top:327.32px;height:40px;line-height:40px;color:#1e1e1e">DownRight</div>
<div class="t s" style="left:284px;top:327.32px;height:40px;line-height:40px;color:#1e1e1e">859</div>
<div  style="left:38.4px;top:365.2px;width:476px;height:36.52px;background:#fff;border-bottom:2.8px solid #ebebeb"></div>
<div  style="left:273.2px;top:365.2px;width:2.8px;height:36.52px;background:#ebebeb"></div>
<div class="t s" style="left:47.6px;top:363.88px;height:40px;line-height:40px;color:#1e1e1e">Right</div>
<div class="t s" style="left:284px;top:363.88px;height:40px;line-height:40px;color:#1e1e1e">913</div>
<div  style="left:38.4px;top:401.72px;width:476px;height:36.52px;background:#fff;border-bottom:2.8px solid #ebebeb"></div>
<div  style="left:273.2px;top:401.72px;width:2.8px;height:36.52px;background:#ebebeb"></div>
<div class="t s" style="left:47.6px;top:400.36px;height:40px;line-height:40px;color:#1e1e1e">UpRight</div>
<div class="t s" style="left:284px;top:400.36px;height:40px;line-height:40px;color:#1e1e1e">859</div>
<div  style="left:38.4px;top:438.24px;width:476px;height:36.52px;background:#fff;border-bottom:2.8px solid #ebebeb"></div>
<div  style="left:273.2px;top:438.24px;width:2.8px;height:36.52px;background:#ebebeb"></div>
<div class="t s" style="left:47.6px;top:436.88px;height:40px;line-height:40px;color:#1e1e1e">Up</div>
<div class="t s" style="left:284px;top:436.88px;height:40px;line-height:40px;color:#1e1e1e">742</div>
<svg style="left:10px;top:483.44px" width="20" height="20" viewBox="0 0 5 5"><rect x=".4" y=".4" width="4.2" height="4.2" fill="#fff" stroke="#919191" stroke-width=".6"/><path d="M1.2 2.5h2.6" stroke="#444" stroke-width=".6"/></svg>
<div class="t s" style="left:47.6px;top:473.44px;height:40px;line-height:40px;color:#808080;-webkit-text-stroke:0.88px #808080;letter-spacing:-0.08px">Center <span class="k">수정</span></div>
<div  style="left:38.4px;top:511.28px;width:476px;height:36.52px;background:#fff;border-bottom:2.8px solid #ebebeb"></div>
<div  style="left:273.2px;top:511.28px;width:2.8px;height:36.52px;background:#ebebeb"></div>
<div class="t s" style="left:47.6px;top:509.96px;height:40px;line-height:40px;color:#1e1e1e">X</div>
<div class="t s" style="left:284px;top:509.96px;height:40px;line-height:40px;color:#1e1e1e">600</div>
<div  style="left:38.4px;top:547.8px;width:476px;height:36.52px;background:#fff;border-bottom:2.8px solid #ebebeb"></div>
<div  style="left:273.2px;top:547.8px;width:2.8px;height:36.52px;background:#ebebeb"></div>
<div class="t s" style="left:47.6px;top:546.48px;height:40px;line-height:40px;color:#1e1e1e">Y</div>
<div class="t s" style="left:284px;top:546.48px;height:40px;line-height:40px;color:#1e1e1e">-28</div>
<svg style="left:46px;top:589.36px" width="20" height="20" viewBox="0 0 5 5"><rect x=".4" y=".4" width="4.2" height="4.2" fill="#fff" stroke="#919191" stroke-width=".6"/><path d="M1.2 2.5h2.6" stroke="#444" stroke-width=".6"/></svg>
<div class="t s" style="left:83.2px;top:579px;height:40px;line-height:40px;color:#808080;-webkit-text-stroke:0.88px #808080;letter-spacing:-0.08px">Wall F</div>
</div>
<div  style="left:514.4px;top:1184px;width:29.6px;height:612px;background:#f0f0f0"></div>
<svg style="left:514.4px;top:1184px" width="29.6" height="29.6" viewBox="0 0 7.4 7.4"><rect x="0" y="0" width="7.4" height="7.4" fill="#f8f8f8"/><path d="M7.1 0v7.1H0" stroke="#6e6e6e" stroke-width=".6" fill="none"/><path d="M.3 7V.3H7" stroke="#fff" stroke-width=".6" fill="none"/><path d="M1.8 4.6L3.7 2.4l1.9 2.2z" fill="#000"/></svg>
<svg style="left:514.4px;top:1765.6px" width="29.6" height="29.6" viewBox="0 0 7.4 7.4"><rect x="0" y="0" width="7.4" height="7.4" fill="#f8f8f8"/><path d="M7.1 0v7.1H0" stroke="#6e6e6e" stroke-width=".6" fill="none"/><path d="M.3 7V.3H7" stroke="#fff" stroke-width=".6" fill="none"/><path d="M1.8 2.6L3.7 4.8l1.9-2.2z" fill="#000"/></svg>
<div  style="left:514.4px;top:1214.4px;width:29.6px;height:128px;background:#f0f0f0;border-right:2.8px solid #6e6e6e;border-bottom:2.8px solid #6e6e6e;border-left:2.4px solid #fff"></div>
<div  style="left:0px;top:1797.2px;width:546.4px;height:116px;background:#ebebeb;border-left:4.8px solid #8c8c8c;border-top:3.2px solid #a8a8a8;border-right:3.2px solid #a8a8a8;border-bottom:3.2px solid #a8a8a8"></div>
<div  style="left:555.2px;top:172px;width:712.4px;height:1741.2px;background:#f0f0f0"></div>
<div  style="left:555.2px;top:172px;width:712.4px;height:37.6px;background:#e9e9e9"></div>
<div class="t h" style="left:564px;top:170.8px;height:40px;line-height:40px;color:#687284;letter-spacing:-0.668px;">Flatness Pane</div>
<svg style="left:1234.4px;top:177.2px" width="24" height="24" viewBox="0 0 6 6"><path d="M1.3 1.3l3.4 3.4M4.7 1.3L1.3 4.7" stroke="#4a4a4a" stroke-width=".85"/></svg>
<div  style="left:577.6px;top:246px;width:661.6px;height:910px;border:3.2px solid #c6c6c6;box-shadow:2.4px 2.4px 0 #fff, inset 2.4px 2.4px 0 #fff"></div>
<div  style="left:586.8px;top:230px;width:117.2px;height:32px;background:#f0f0f0"></div>
<div class="t f" style="left:591.6px;top:227.2px;height:40px;line-height:40px;">Input Data</div>
<div class="t f" style="left:615px;top:276.4px;height:40px;line-height:40px;">Parameters</div>
<div  style="left:749px;top:278.4px;width:6px;height:37.2px;background:linear-gradient(90deg,#8c8c8c 0,#7a7a7a 50%,#fafafa 50%,#fafafa 100%)"></div>
<div class="t f" style="left:760px;top:281.2px;height:40px;line-height:40px;">Piling</div>
<div  style="left:829px;top:278.4px;width:6px;height:37.2px;background:linear-gradient(90deg,#8c8c8c 0,#7a7a7a 50%,#fafafa 50%,#fafafa 100%)"></div>
<div class="t f" style="left:844px;top:281.2px;height:40px;line-height:40px;">Ropes</div>
<div  style="left:917px;top:278.4px;width:6px;height:37.2px;background:linear-gradient(90deg,#8c8c8c 0,#7a7a7a 50%,#fafafa 50%,#fafafa 100%)"></div>
<div class="t f" style="left:934px;top:281.2px;height:40px;line-height:40px;">Allowances</div>
<div  style="left:1061px;top:278.4px;width:6px;height:37.2px;background:linear-gradient(90deg,#8c8c8c 0,#7a7a7a 50%,#fafafa 50%,#fafafa 100%)"></div>
<div class="t f" style="left:1075px;top:281.2px;height:40px;line-height:40px;">Wedges</div>
<div  style="left:1169px;top:278.4px;width:6px;height:37.2px;background:linear-gradient(90deg,#8c8c8c 0,#7a7a7a 50%,#fafafa 50%,#fafafa 100%)"></div>
<div  style="left:602px;top:276.8px;width:148px;height:2.4px;background:#fff"></div>
<div  style="left:601.2px;top:276.8px;width:2.8px;height:38.4px;background:#fff"></div>
<div class="t f" style="left:642.4px;top:363.6px;height:40px;line-height:40px;">Compute with Peripheral Line</div>
<svg style="left:984.8px;top:372px" width="20" height="20" viewBox="0 0 5 5"><rect x="0" y="0" width="5" height="5" fill="#fff"/><path d="M.3 5V.3H5" stroke="#5a5a5a" stroke-width=".7" fill="none"/><path d="M1.1 2.3l1.1 1.4 1.8-2.6" stroke="#000" stroke-width="1.05" fill="none"/></svg>
<div class="t f" style="left:639.2px;top:421.2px;height:40px;line-height:40px;">Type of Computing</div>
<div class="inp" role="combobox" style="left:983.6px;top:426px;width:196.4px;height:40.4px;line-height:32.4px;padding-top:3.6px">Border</div>
<svg style="left:1150.4px;top:430px" width="26.4" height="32.4" viewBox="0 0 6.6 8.10"><rect width="6.6" height="8.10" fill="#f0f0f0"/><path d="M6.3 0v7.80H0" stroke="#555" stroke-width=".6" fill="none"/><path d="M.3 7.80V.3H6.6" stroke="#fff" stroke-width=".6" fill="none"/><path d="M1.6 3.25h3.4l-1.7 2z" fill="#000"/></svg>
<div class="t f" style="left:639.2px;top:486.8px;height:40px;line-height:40px;">Minimum Distance (mm)</div>
<div class="inp" role="textbox" style="left:983.6px;top:490.8px;width:196.4px;height:42.8px;line-height:34.8px;padding-top:1.2px">150</div>
<div class="t f" style="left:639.2px;top:551.8px;height:40px;line-height:40px;">Elevation Check (mm)</div>
<div class="inp" role="textbox" style="left:983.6px;top:555.8px;width:196.4px;height:42.8px;line-height:34.8px;padding-top:1.2px">15</div>
<div class="t f" style="left:639.2px;top:616.8px;height:40px;line-height:40px;">Special Coupler (mm)</div>
<div class="inp" role="textbox" style="left:983.6px;top:620.8px;width:196.4px;height:42.8px;line-height:34.8px;padding-top:1.2px">18</div>
<div class="t f" style="left:639.2px;top:681.8px;height:40px;line-height:40px;">Maximum Box (mm)</div>
<div class="inp" role="textbox" style="left:983.6px;top:685.8px;width:196.4px;height:42.8px;line-height:34.8px;padding-top:1.2px">15</div>
<div class="t f" style="left:639.2px;top:746.8px;height:40px;line-height:40px;">Maximum Difference (mm)</div>
<div class="inp" role="textbox" style="left:983.6px;top:750.8px;width:196.4px;height:42.8px;line-height:34.8px;padding-top:1.2px">0</div>
<div class="t f" style="left:639.2px;top:811.8px;height:40px;line-height:40px;">Border Parameter (mm)</div>
<div class="inp" role="textbox" style="left:983.6px;top:815.8px;width:196.4px;height:42.8px;line-height:34.8px;padding-top:1.2px">0</div>
<div class="t f" style="left:639.2px;top:876.8px;height:40px;line-height:40px;">Twisting (mm)</div>
<div class="inp" role="textbox" style="left:983.6px;top:880.8px;width:196.4px;height:42.8px;line-height:34.8px;padding-top:1.2px">2</div>
<div class="t f" style="left:607.6px;top:1086px;height:40px;line-height:40px;">dz Step</div>
<div class="inp" role="combobox" style="left:724.4px;top:1086px;width:154.4px;height:40.4px;line-height:32.4px;padding-top:3.6px">0.001</div>
<svg style="left:849.2px;top:1090px" width="26.4" height="32.4" viewBox="0 0 6.6 8.10"><rect width="6.6" height="8.10" fill="#f0f0f0"/><path d="M6.3 0v7.80H0" stroke="#555" stroke-width=".6" fill="none"/><path d="M.3 7.80V.3H6.6" stroke="#fff" stroke-width=".6" fill="none"/><path d="M1.6 3.25h3.4l-1.7 2z" fill="#000"/></svg>
<button class="btn" type="button" style="left:939.2px;top:1076.8px;width:280.4px;height:52.8px;line-height:44.8px;">Update Input Data</button>
<div class="t f" style="left:575.2px;top:1177.2px;height:40px;line-height:40px;">Preparation</div>
<div  style="left:726px;top:1187.6px;width:511.2px;height:14.8px;background:#0a78d6;border-top:2.4px solid #9c9c9c;border-left:2.4px solid #9c9c9c;border-right:2px solid #fff;border-bottom:2px solid #fff"></div>
<button class="btn" type="button" style="left:576.8px;top:1231.6px;width:198.8px;height:61.6px;line-height:53.6px;">Box Numbering</button>
<button class="btn" type="button" style="left:796.8px;top:1231.6px;width:241.2px;height:61.6px;line-height:53.6px;">Box-Coupler Map</button>
<button class="btn" type="button" style="left:1060px;top:1231.6px;width:181.6px;height:61.6px;line-height:53.6px;">Coupler Data</button>
<div class="t f" style="left:575.2px;top:1326px;height:40px;line-height:40px;">Flatness Calculation</div>
<div  style="left:818px;top:1346.4px;width:421.2px;height:15.2px;background:#eeeeee;border-top:3.2px solid #9c9c9c;border-left:3.2px solid #9c9c9c;border-right:2.4px solid #fff;border-bottom:2.4px solid #fff"></div>
<div  style="left:820px;top:1348.4px;width:22.4px;height:11.2px;background:#0a78d6"></div>
<button class="btn" type="button" style="left:576.8px;top:1378.4px;width:198.8px;height:61.6px;line-height:53.6px;">Prerequisite</button>
<button class="btn" type="button" style="left:796.8px;top:1378.4px;width:241.2px;height:61.6px;line-height:53.6px;outline:2px dotted #444;outline-offset:-10.4px;border:3.6px solid #3a3a3a;box-shadow:inset 2.8px 2.8px 0 #fff, inset -4px -4px 0 #6c6c6c, inset -6.8px -6.8px 0 #a6a6a6;">Computation</button>
<button class="btn" type="button" style="left:1060px;top:1378.4px;width:181.6px;height:61.6px;line-height:53.6px;">Wall Status</button>
<div class="t f" style="left:575.2px;top:1485.6px;height:40px;line-height:40px;">Results</div>
<div  style="left:897.6px;top:1479.2px;width:341.6px;height:87.6px;border:3.2px solid #c6c6c6;box-shadow:2.4px 2.4px 0 #fff, inset 2.4px 2.4px 0 #fff"></div>
<div  style="left:911.2px;top:1463.2px;width:236px;height:32px;background:#f0f0f0"></div>
<div class="t f" style="left:916px;top:1460.4px;height:40px;line-height:40px;">Wall Status Initializing</div>
<button class="btn" type="button" style="left:916px;top:1506.8px;width:170.4px;height:49.2px;line-height:41.2px;">Selected</button>
<button class="btn" type="button" style="left:1099.2px;top:1506.8px;width:120.8px;height:49.2px;line-height:41.2px;">All</button>
<button class="btn" type="button" style="left:576.8px;top:1527.2px;width:198.8px;height:62px;line-height:54px;">Save Results</button>
<div class="t f" style="left:575.2px;top:1633.2px;height:40px;line-height:40px;">Drawings</div>
<div  style="left:697.6px;top:1641.6px;width:542px;height:17.6px;background:#eeeeee;border-top:3.2px solid #9c9c9c;border-left:3.2px solid #9c9c9c;border-right:2.4px solid #fff;border-bottom:2.4px solid #fff"></div>
<button class="btn" type="button" style="left:576px;top:1676px;width:322.4px;height:62px;line-height:54px;">Reference Wedges</button>
<button class="btn" type="button" style="left:916px;top:1676px;width:323.6px;height:62px;line-height:54px;">Box (Rope Info.)</button>
<div class="t f" style="left:575.2px;top:1777.2px;height:40px;line-height:40px;">No.</div>
<div class="inp" role="combobox" style="left:636px;top:1779.2px;width:176px;height:36.4px;line-height:28.4px;padding-top:3.6px">1</div>
<svg style="left:782.4px;top:1783.2px" width="26.4" height="28.4" viewBox="0 0 6.6 7.10"><rect width="6.6" height="7.10" fill="#f0f0f0"/><path d="M6.3 0v6.80H0" stroke="#555" stroke-width=".6" fill="none"/><path d="M.3 6.80V.3H6.6" stroke="#fff" stroke-width=".6" fill="none"/><path d="M1.6 2.75h3.4l-1.7 2z" fill="#000"/></svg>
<button class="btn" type="button" style="left:837.2px;top:1761.2px;width:160px;height:62.8px;line-height:54.8px;">Section</button>
<button class="btn" type="button" style="left:1017.2px;top:1761.2px;width:222.4px;height:62.8px;line-height:54.8px;">Periphery Line</button>
<div class="t f" style="left:575.2px;top:1864.8px;height:40px;line-height:40px;">Levels</div>
<div class="inp" role="combobox" style="left:657.2px;top:1866.8px;width:154.8px;height:36.4px;line-height:28.4px;padding-top:3.6px">5</div>
<svg style="left:782.4px;top:1870.8px" width="26.4" height="28.4" viewBox="0 0 6.6 7.10"><rect width="6.6" height="7.10" fill="#f0f0f0"/><path d="M6.3 0v6.80H0" stroke="#555" stroke-width=".6" fill="none"/><path d="M.3 6.80V.3H6.6" stroke="#fff" stroke-width=".6" fill="none"/><path d="M1.6 2.75h3.4l-1.7 2z" fill="#000"/></svg>
<button class="btn" type="button" style="left:837.2px;top:1846.8px;width:160px;height:62px;line-height:54px;">Contour</button>
<div  style="left:1274.8px;top:172px;width:644.4px;height:1741.2px;background:#e4e4e4"></div>
<div class="hdr"  style="left:1274.8px;top:172px;width:638px;height:38px;border-top:4px solid #b8b8b8"></div>
<div class="t h" style="left:1283.2px;top:171.2px;height:40px;line-height:40px;letter-spacing:0.724px;">Output</div>
<svg style="left:1885.2px;top:177.6px" width="24" height="24" viewBox="0 0 6 6"><path d="M1.3 1.3l3.4 3.4M4.7 1.3L1.3 4.7" stroke="#484848" stroke-width=".9"/></svg>
<div  style="left:1278.4px;top:216.8px;width:632.8px;height:37.2px;background:#fff;border:3.2px solid #7a7a7a;border-right-color:#c8c8c8;border-bottom-color:#c8c8c8"></div>
<div class="t o" style="left:1287.6px;top:214px;height:40px;line-height:40px;letter-spacing:-0.244px;">### Elapsed Time = 0.099 sec (0.002 min) ###</div>
<div  style="left:1278.4px;top:256.8px;width:632.8px;height:1622.4px;background:#fff;border:3.2px solid #7a7a7a;border-right-color:#c8c8c8;border-bottom-color:#c8c8c8"></div>
<div class="t o" style="left:1287.6px;top:253.2px;height:40px;line-height:40px;letter-spacing:0.26px;">### Box Numbering ###</div>
<div class="t o" style="left:1304.8px;top:278.16px;height:40px;line-height:40px;letter-spacing:-0.236px;">Wall=B, Row[-14, 14], Col[-17, 15]</div>
<div class="t o" style="left:1287.6px;top:303.12px;height:40px;line-height:40px;letter-spacing:-0.244px;">### Elapsed Time = 0.008 sec (0.000 min) ###</div>
<div class="t o" style="left:1287.6px;top:328.08px;height:40px;line-height:40px;letter-spacing:0.34px;">### Box-Coupler Mapping ###</div>
<div class="t o" style="left:1304.8px;top:353.04px;height:40px;line-height:40px;letter-spacing:-0.216px;">Number of Boxes = 876</div>
<div class="t o" style="left:1304.8px;top:378px;height:40px;line-height:40px;letter-spacing:0.072px;">Number of Couplers = 964</div>
<div class="t o" style="left:1287.6px;top:402.96px;height:40px;line-height:40px;letter-spacing:-0.244px;">### Elapsed Time = 0.091 sec (0.002 min) ###</div>
<div class="t o" style="left:1287.6px;top:427.92px;height:40px;line-height:40px;letter-spacing:0.176px;">### Load Coupler Data ###</div>
<div class="t o" style="left:1304.8px;top:452.88px;height:40px;line-height:40px;letter-spacing:0.056px;">Number of Indexed Couplers = 964</div>
<div class="t o" style="left:1304.8px;top:477.84px;height:40px;line-height:40px;letter-spacing:0.028px;">Number of Indexed Peripheric Points = 108</div>
<div class="t o" style="left:1304.8px;top:502.8px;height:40px;line-height:40px;letter-spacing:-0.124px;">Size of umCoupler = 964</div>
<div class="t o" style="left:1304.8px;top:527.76px;height:40px;line-height:40px;letter-spacing:-0.108px;">Size of umPeripheric = 108</div>
<div class="t o" style="left:1287.6px;top:552.72px;height:40px;line-height:40px;letter-spacing:-0.244px;">### Elapsed Time = 4.959 sec (0.083 min) ###</div>
<div class="t o" style="left:1287.6px;top:577.68px;height:40px;line-height:40px;letter-spacing:0.156px;">### Prerequisite for Flatness Calculation ###</div>
<div class="t o" style="left:1287.6px;top:602.64px;height:40px;line-height:40px;letter-spacing:-0.108px;">&gt;&gt; <span class="k">최소</span> z<span class="k">값</span>: 14.3 (Coupler:860)</div>
<div class="t o" style="left:1287.6px;top:627.6px;height:40px;line-height:40px;letter-spacing:0.44px;">&gt;&gt; z<span class="k">값</span> <span class="k">기준의</span> <span class="k">오름차순</span> <span class="k">정보</span> <span class="k">생성</span>...</div>
<div class="t o" style="left:1304.8px;top:652.56px;height:40px;line-height:40px;letter-spacing:-0.084px;">@ Number of zCouplers = 1072</div>
<div class="t o" style="left:1287.6px;top:677.52px;height:40px;line-height:40px;letter-spacing:0.536px;">&gt;&gt; <span class="k">커플러를</span> <span class="k">공유하는</span> <span class="k">박스정보</span> <span class="k">생성</span>...</div>
<div class="t o" style="left:1304.8px;top:702.48px;height:40px;line-height:40px;letter-spacing:-0.024px;">@ Number of cmbCouplers = 964</div>
<div class="t o" style="left:1304.8px;top:727.44px;height:40px;line-height:40px;letter-spacing:0.136px;">@ Number of boxes located in Side Opening = 0</div>
<div class="t o" style="left:1287.6px;top:752.4px;height:40px;line-height:40px;letter-spacing:-0.388px;">&gt;&gt; Number of Positions: 964</div>
<div class="t o" style="left:1287.6px;top:777.36px;height:40px;line-height:40px;letter-spacing:0.632px;">&gt;&gt; <span class="k">커플러의</span> <span class="k">수평</span>/<span class="k">수직</span> <span class="k">멤버</span> <span class="k">생성</span>...</div>
<div class="t o" style="left:1287.6px;top:802.32px;height:40px;line-height:40px;letter-spacing:0.188px;">&gt;&gt; Number of Assigned Coupler: 962</div>
<div class="t o" style="left:1287.6px;top:827.28px;height:40px;line-height:40px;letter-spacing:0.224px;">&gt;&gt; Number of Unassigned Coupler: 2</div>
<div class="t o" style="left:1287.6px;top:852.24px;height:40px;line-height:40px;letter-spacing:-0.448px;">44</div>
<div class="t o" style="left:1287.6px;top:877.2px;height:40px;line-height:40px;letter-spacing:-0.448px;">90</div>
<div class="t o" style="left:1287.6px;top:902.16px;height:40px;line-height:40px;letter-spacing:0.452px;">&gt;&gt; <span class="k">페리퍼릭의</span> <span class="k">수평</span> <span class="k">및</span> <span class="k">수직</span> <span class="k">멤버</span> <span class="k">생성</span>...</div>
<div class="t o" style="left:1304.8px;top:927.12px;height:40px;line-height:40px;letter-spacing:-0.084px;">@ Number of cmhCouplers = 1032</div>
<div class="t o" style="left:1304.8px;top:952.08px;height:40px;line-height:40px;letter-spacing:-0.132px;">@ Number of cmvCouplers = 943</div>
<div class="t o" style="left:1287.6px;top:977.04px;height:40px;line-height:40px;letter-spacing:0.508px;">&gt;&gt; <span class="k">커플러</span> <span class="k">및</span> <span class="k">페리퍼릭</span> <span class="k">업데이트를</span> <span class="k">위한</span> <span class="k">이웃</span> <span class="k">데이터</span> <span class="k">생성</span>...</div>
<div class="t o" style="left:1304.8px;top:1002px;height:40px;line-height:40px;letter-spacing:0.156px;">@ Number of cmhCouplers = 1062</div>
<div class="t o" style="left:1304.8px;top:1026.96px;height:40px;line-height:40px;letter-spacing:0.076px;">@ Number of cmvCouplers = 1013</div>
<div class="t o" style="left:1287.6px;top:1051.92px;height:40px;line-height:40px;letter-spacing:0.344px;">&gt;&gt; <span class="k">박스의</span> <span class="k">구성</span> <span class="k">커플러를</span> CCW<span class="k">로</span> <span class="k">정렬</span> <span class="k">후</span> <span class="k">업데이트</span>...</div>
<div class="t o" style="left:1287.6px;top:1076.88px;height:40px;line-height:40px;letter-spacing:0.292px;">&gt;&gt; Convex Hull<span class="k">를</span> <span class="k">구성하는</span> <span class="k">커플러</span> <span class="k">탐색</span>...</div>
<div class="t o" style="left:1304.8px;top:1101.84px;height:40px;line-height:40px;letter-spacing:0.068px;">Bottom-Left Coupler = 964</div>
<div class="t o" style="left:1287.6px;top:1126.8px;height:40px;line-height:40px;letter-spacing:0.104px;">### Check Hor./Ver. Component...</div>
<div  style="left:1282.4px;top:1159.36px;width:624px;height:24.8px;background:#0a78d6"></div>
<div class="t o" style="left:1287.6px;top:1151.76px;height:40px;line-height:40px;color:#fff;letter-spacing:-0.244px;">### Elapsed Time = 0.099 sec (0.002 min) ###</div>
<div class="t o" style="left:1287.6px;top:1176.72px;height:40px;line-height:40px;letter-spacing:0.168px;">### Flatness Calculation ###</div>
<div class="t o" style="left:1287.6px;top:1201.68px;height:40px;line-height:40px;letter-spacing:0.296px;">&gt;&gt; Design Criteria were updated.</div>
<div class="t o" style="left:1287.6px;top:1226.64px;height:40px;line-height:40px;letter-spacing:-0.3px;">dzStep = 0.001</div>
<div class="t o" style="left:1287.6px;top:1251.6px;height:40px;line-height:40px;letter-spacing:-0.8px;">Phase[1]...</div>
<div class="t o" style="left:1304.8px;top:1276.56px;height:40px;line-height:40px;letter-spacing:-0.336px;">[1000] Fixed = 2 / 1072</div>
<div class="t o" style="left:1304.8px;top:1301.52px;height:40px;line-height:40px;letter-spacing:-0.336px;">[2000] Fixed = 5 / 1072</div>
<div class="t o" style="left:1304.8px;top:1326.48px;height:40px;line-height:40px;letter-spacing:-0.396px;">[3000] Fixed = 15 / 1072</div>
<div class="t o" style="left:1304.8px;top:1351.44px;height:40px;line-height:40px;letter-spacing:-0.396px;">[4000] Fixed = 37 / 1072</div>
<div  style="left:1274.8px;top:1880px;width:644.4px;height:33.2px;background:#666"></div>
<svg style="left:1274.8px;top:1880px" width="184" height="33.2" viewBox="0 0 46 8.3"><path d="M31 8.3V0h12.6L37 8.3z" fill="#fff"/><path d="M0 0h31v8.3H0z" fill="#e6e6e6"/><rect x="1.5" y="1.2" width="5.8" height="5.8" fill="#f6f6f6" stroke="#3c3c3c" stroke-width=".7"/><rect x="9.5" y="1.2" width="5.8" height="5.8" fill="#f6f6f6" stroke="#3c3c3c" stroke-width=".7"/><rect x="17.5" y="1.2" width="5.8" height="5.8" fill="#f6f6f6" stroke="#3c3c3c" stroke-width=".7"/><rect x="25.5" y="1.2" width="5.8" height="5.8" fill="#f6f6f6" stroke="#3c3c3c" stroke-width=".7"/><path d="M3 2.6v3" stroke="#111" stroke-width=".8"/><path d="M6.1 2.4L3.9 4.1l2.2 1.7z" fill="#111"/><path d="M13.6 2.4l-2.2 1.7 2.2 1.7z" fill="#111"/><path d="M19.3 2.4l2.2 1.7-2.2 1.7z" fill="#111"/><path d="M29.9 2.6v3" stroke="#111" stroke-width=".8"/><path d="M26.8 2.4L29 4.1l-2.2 1.7z" fill="#111"/></svg>
<div  style="left:1923.6px;top:172px;width:1364.4px;height:1748px;background:#9c9c9c"></div>
<div  style="left:1927.6px;top:172px;width:1353.2px;height:1740px;background:#000"></div>
<svg style="left:1927.6px;top:172px" width="1353.2" height="1740" viewBox="0 0 338.30 435.00"><path d="M97.60 125.10L101.60 125.10M101.60 125.10L109.60 125.10M109.60 125.10L117.60 125.10M117.60 125.10L125.60 125.10M125.60 125.10L133.60 125.10M133.60 125.10L141.60 125.10M141.60 125.10L149.60 125.10M149.60 125.10L157.60 125.10M157.60 125.10L165.60 125.10M165.60 125.10L173.60 125.10M173.60 125.10L181.60 125.10M181.60 125.10L189.60 125.10M189.60 125.10L197.60 125.10M197.60 125.10L205.60 125.10M205.60 125.10L213.60 125.10M213.60 125.10L221.60 125.10M221.60 125.10L229.60 125.10M229.60 125.10L237.60 125.10M237.60 125.10L241.40 125.10M94.20 128.50L101.60 128.50M101.60 128.50L109.60 128.50M109.60 128.50L117.60 128.50M117.60 128.50L125.60 128.50M125.60 128.50L133.60 128.50M133.60 128.50L141.60 128.50M141.60 128.50L149.60 128.50M149.60 128.50L157.60 128.50M157.60 128.50L165.60 128.50M165.60 128.50L173.60 128.50M173.60 128.50L181.60 128.50M181.60 128.50L189.60 128.50M189.60 128.50L197.60 128.50M197.60 128.50L205.60 128.50M205.60 128.50L213.60 128.50M213.60 128.50L221.60 128.50M221.60 128.50L229.60 128.50M229.60 128.50L237.60 128.50M237.60 128.50L244.80 128.50M87.60 135.10L93.60 135.10M93.60 135.10L101.60 135.10M101.60 135.10L109.60 135.10M109.60 135.10L117.60 135.10M117.60 135.10L125.60 135.10M125.60 135.10L133.60 135.10M133.60 135.10L141.60 135.10M141.60 135.10L149.60 135.10M149.60 135.10L157.60 135.10M157.60 135.10L165.60 135.10M165.60 135.10L173.60 135.10M173.60 135.10L181.60 135.10M181.60 135.10L189.60 135.10M189.60 135.10L197.60 135.10M197.60 135.10L205.60 135.10M205.60 135.10L213.60 135.10M213.60 135.10L221.60 135.10M221.60 135.10L229.60 135.10M229.60 135.10L237.60 135.10M237.60 135.10L245.60 135.10M245.60 135.10L251.40 135.10M80.95 141.75L85.60 141.75M85.60 141.75L93.60 141.75M93.60 141.75L101.60 141.75M101.60 141.75L109.60 141.75M109.60 141.75L117.60 141.75M117.60 141.75L125.60 141.75M125.60 141.75L133.60 141.75M133.60 141.75L141.60 141.75M141.60 141.75L149.60 141.75M149.60 141.75L157.60 141.75M157.60 141.75L165.60 141.75M165.60 141.75L173.60 141.75M173.60 141.75L181.60 141.75M181.60 141.75L189.60 141.75M189.60 141.75L197.60 141.75M197.60 141.75L205.60 141.75M205.60 141.75L213.60 141.75M213.60 141.75L221.60 141.75M221.60 141.75L229.60 141.75M229.60 141.75L237.60 141.75M237.60 141.75L245.60 141.75M245.60 141.75L253.60 141.75M253.60 141.75L258.05 141.75M74.45 148.25L77.60 148.25M77.60 148.25L85.60 148.25M85.60 148.25L93.60 148.25M93.60 148.25L101.60 148.25M101.60 148.25L109.60 148.25M109.60 148.25L117.60 148.25M117.60 148.25L125.60 148.25M125.60 148.25L133.60 148.25M133.60 148.25L141.60 148.25M141.60 148.25L149.60 148.25M149.60 148.25L157.60 148.25M157.60 148.25L165.60 148.25M165.60 148.25L173.60 148.25M173.60 148.25L181.60 148.25M181.60 148.25L189.60 148.25M189.60 148.25L197.60 148.25M197.60 148.25L205.60 148.25M205.60 148.25L213.60 148.25M213.60 148.25L221.60 148.25M221.60 148.25L229.60 148.25M229.60 148.25L237.60 148.25M237.60 148.25L245.60 148.25M245.60 148.25L253.60 148.25M253.60 148.25L261.60 148.25M261.60 148.25L264.55 148.25M67.80 154.90L69.60 154.90M69.60 154.90L77.60 154.90M77.60 154.90L85.60 154.90M85.60 154.90L93.60 154.90M93.60 154.90L101.60 154.90M237.60 154.90L245.60 154.90M245.60 154.90L253.60 154.90M253.60 154.90L261.60 154.90M261.60 154.90L269.60 154.90M269.60 154.90L271.20 154.90M61.20 161.50L61.60 161.50M61.60 161.50L69.60 161.50M69.60 161.50L77.60 161.50M77.60 161.50L85.60 161.50M85.60 161.50L93.60 161.50M93.60 161.50L101.60 161.50M237.60 161.50L245.60 161.50M245.60 161.50L253.60 161.50M253.60 161.50L261.60 161.50M261.60 161.50L269.60 161.50M269.60 161.50L277.60 161.50M54.60 168.10L61.60 168.10M61.60 168.10L69.60 168.10M69.60 168.10L77.60 168.10M77.60 168.10L85.60 168.10M85.60 168.10L93.60 168.10M93.60 168.10L101.60 168.10M237.60 168.10L245.60 168.10M245.60 168.10L253.60 168.10M253.60 168.10L261.60 168.10M261.60 168.10L269.60 168.10M269.60 168.10L277.60 168.10M277.60 168.10L284.40 168.10M48.00 174.70L53.60 174.70M53.60 174.70L61.60 174.70M61.60 174.70L69.60 174.70M69.60 174.70L77.60 174.70M77.60 174.70L85.60 174.70M85.60 174.70L93.60 174.70M93.60 174.70L101.60 174.70M237.60 174.70L245.60 174.70M245.60 174.70L253.60 174.70M253.60 174.70L261.60 174.70M261.60 174.70L269.60 174.70M269.60 174.70L277.60 174.70M277.60 174.70L285.60 174.70M285.60 174.70L291.00 174.70M41.30 181.40L45.60 181.40M45.60 181.40L53.60 181.40M53.60 181.40L61.60 181.40M61.60 181.40L69.60 181.40M69.60 181.40L77.60 181.40M77.60 181.40L85.60 181.40M85.60 181.40L93.60 181.40M93.60 181.40L101.60 181.40M237.60 181.40L245.60 181.40M245.60 181.40L253.60 181.40M253.60 181.40L261.60 181.40M261.60 181.40L269.60 181.40M269.60 181.40L277.60 181.40M277.60 181.40L285.60 181.40M285.60 181.40L293.60 181.40M293.60 181.40L297.70 181.40M39.60 188.10L45.60 188.10M45.60 188.10L53.60 188.10M53.60 188.10L61.60 188.10M61.60 188.10L69.60 188.10M69.60 188.10L77.60 188.10M77.60 188.10L85.60 188.10M85.60 188.10L93.60 188.10M93.60 188.10L101.60 188.10M237.60 188.10L245.60 188.10M245.60 188.10L253.60 188.10M253.60 188.10L261.60 188.10M261.60 188.10L269.60 188.10M269.60 188.10L277.60 188.10M277.60 188.10L285.60 188.10M285.60 188.10L293.60 188.10M293.60 188.10L299.60 188.10M39.60 181.40L39.60 188.10M45.60 181.40L45.60 188.10M53.60 169.10L53.60 174.70M53.60 174.70L53.60 181.40M53.60 181.40L53.60 188.10M61.60 161.50L61.60 168.10M61.60 168.10L61.60 174.70M61.60 174.70L61.60 181.40M61.60 181.40L61.60 188.10M69.60 154.90L69.60 161.50M69.60 161.50L69.60 168.10M69.60 168.10L69.60 174.70M69.60 174.70L69.60 181.40M69.60 181.40L69.60 188.10M77.60 148.25L77.60 154.90M77.60 154.90L77.60 161.50M77.60 161.50L77.60 168.10M77.60 168.10L77.60 174.70M77.60 174.70L77.60 181.40M77.60 181.40L77.60 188.10M85.60 141.75L85.60 148.25M85.60 148.25L85.60 154.90M85.60 154.90L85.60 161.50M85.60 161.50L85.60 168.10M85.60 168.10L85.60 174.70M85.60 174.70L85.60 181.40M85.60 181.40L85.60 188.10M93.60 129.10L93.60 135.10M93.60 135.10L93.60 141.75M93.60 141.75L93.60 148.25M93.60 148.25L93.60 154.90M93.60 154.90L93.60 161.50M93.60 161.50L93.60 168.10M93.60 168.10L93.60 174.70M93.60 174.70L93.60 181.40M93.60 181.40L93.60 188.10M101.60 125.10L101.60 128.50M101.60 128.50L101.60 135.10M101.60 135.10L101.60 141.75M101.60 141.75L101.60 148.25M101.60 148.25L101.60 154.90M101.60 154.90L101.60 161.50M101.60 161.50L101.60 168.10M101.60 168.10L101.60 174.70M101.60 174.70L101.60 181.40M101.60 181.40L101.60 188.10M109.60 125.10L109.60 128.50M109.60 128.50L109.60 135.10M109.60 135.10L109.60 141.75M109.60 141.75L109.60 148.25M117.60 125.10L117.60 128.50M117.60 128.50L117.60 135.10M117.60 135.10L117.60 141.75M117.60 141.75L117.60 148.25M125.60 125.10L125.60 128.50M125.60 128.50L125.60 135.10M125.60 135.10L125.60 141.75M125.60 141.75L125.60 148.25M133.60 125.10L133.60 128.50M133.60 128.50L133.60 135.10M133.60 135.10L133.60 141.75M133.60 141.75L133.60 148.25M141.60 125.10L141.60 128.50M141.60 128.50L141.60 135.10M141.60 135.10L141.60 141.75M141.60 141.75L141.60 148.25M149.60 125.10L149.60 128.50M149.60 128.50L149.60 135.10M149.60 135.10L149.60 141.75M149.60 141.75L149.60 148.25M157.60 125.10L157.60 128.50M157.60 128.50L157.60 135.10M157.60 135.10L157.60 141.75M157.60 141.75L157.60 148.25M165.60 125.10L165.60 128.50M165.60 128.50L165.60 135.10M165.60 135.10L165.60 141.75M165.60 141.75L165.60 148.25M173.60 125.10L173.60 128.50M173.60 128.50L173.60 135.10M173.60 135.10L173.60 141.75M173.60 141.75L173.60 148.25M181.60 125.10L181.60 128.50M181.60 128.50L181.60 135.10M181.60 135.10L181.60 141.75M181.60 141.75L181.60 148.25M189.60 125.10L189.60 128.50M189.60 128.50L189.60 135.10M189.60 135.10L189.60 141.75M189.60 141.75L189.60 148.25M197.60 125.10L197.60 128.50M197.60 128.50L197.60 135.10M197.60 135.10L197.60 141.75M197.60 141.75L197.60 148.25M205.60 125.10L205.60 128.50M205.60 128.50L205.60 135.10M205.60 135.10L205.60 141.75M205.60 141.75L205.60 148.25M213.60 125.10L213.60 128.50M213.60 128.50L213.60 135.10M213.60 135.10L213.60 141.75M213.60 141.75L213.60 148.25M221.60 125.10L221.60 128.50M221.60 128.50L221.60 135.10M221.60 135.10L221.60 141.75M221.60 141.75L221.60 148.25M229.60 125.10L229.60 128.50M229.60 128.50L229.60 135.10M229.60 135.10L229.60 141.75M229.60 141.75L229.60 148.25M237.60 125.10L237.60 128.50M237.60 128.50L237.60 135.10M237.60 135.10L237.60 141.75M237.60 141.75L237.60 148.25M237.60 148.25L237.60 154.90M237.60 154.90L237.60 161.50M237.60 161.50L237.60 168.10M237.60 168.10L237.60 174.70M237.60 174.70L237.60 181.40M237.60 181.40L237.60 188.10M245.60 129.30L245.60 135.10M245.60 135.10L245.60 141.75M245.60 141.75L245.60 148.25M245.60 148.25L245.60 154.90M245.60 154.90L245.60 161.50M245.60 161.50L245.60 168.10M245.60 168.10L245.60 174.70M245.60 174.70L245.60 181.40M245.60 181.40L245.60 188.10M253.60 141.75L253.60 148.25M253.60 148.25L253.60 154.90M253.60 154.90L253.60 161.50M253.60 161.50L253.60 168.10M253.60 168.10L253.60 174.70M253.60 174.70L253.60 181.40M253.60 181.40L253.60 188.10M261.60 148.25L261.60 154.90M261.60 154.90L261.60 161.50M261.60 161.50L261.60 168.10M261.60 168.10L261.60 174.70M261.60 174.70L261.60 181.40M261.60 181.40L261.60 188.10M269.60 154.90L269.60 161.50M269.60 161.50L269.60 168.10M269.60 168.10L269.60 174.70M269.60 174.70L269.60 181.40M269.60 181.40L269.60 188.10M277.60 161.50L277.60 168.10M277.60 168.10L277.60 174.70M277.60 174.70L277.60 181.40M277.60 181.40L277.60 188.10M285.60 169.30L285.60 174.70M285.60 174.70L285.60 181.40M285.60 181.40L285.60 188.10M293.60 181.40L293.60 188.10M299.60 181.40L299.60 188.10" stroke="#9a1ed6" stroke-width="1.08" fill="none" /><path d="M39.60 251.09L45.60 251.09M45.60 251.09L53.60 251.09M53.60 251.09L61.60 251.09M61.60 251.09L69.60 251.09M269.60 251.09L277.60 251.09M277.60 251.09L285.60 251.09M285.60 251.09L293.60 251.09M293.60 251.09L299.60 251.09M39.60 257.71L45.60 257.71M45.60 257.71L53.60 257.71M53.60 257.71L61.60 257.71M61.60 257.71L69.60 257.71M269.60 257.71L277.60 257.71M277.60 257.71L285.60 257.71M285.60 257.71L293.60 257.71M293.60 257.71L299.60 257.71M39.60 264.33L45.60 264.33M45.60 264.33L53.60 264.33M53.60 264.33L61.60 264.33M61.60 264.33L69.60 264.33M269.60 264.33L277.60 264.33M277.60 264.33L285.60 264.33M285.60 264.33L293.60 264.33M293.60 264.33L299.60 264.33M39.60 270.95L45.60 270.95M45.60 270.95L53.60 270.95M53.60 270.95L61.60 270.95M61.60 270.95L69.60 270.95M269.60 270.95L277.60 270.95M277.60 270.95L285.60 270.95M285.60 270.95L293.60 270.95M293.60 270.95L299.60 270.95M39.60 277.57L45.60 277.57M45.60 277.57L53.60 277.57M53.60 277.57L61.60 277.57M61.60 277.57L69.60 277.57M269.60 277.57L277.60 277.57M277.60 277.57L285.60 277.57M285.60 277.57L293.60 277.57M293.60 277.57L299.60 277.57M40.59 284.19L45.60 284.19M45.60 284.19L53.60 284.19M53.60 284.19L61.60 284.19M61.60 284.19L69.60 284.19M269.60 284.19L277.60 284.19M277.60 284.19L285.60 284.19M285.60 284.19L293.60 284.19M293.60 284.19L298.61 284.19M47.21 290.81L53.60 290.81M53.60 290.81L61.60 290.81M61.60 290.81L69.60 290.81M269.60 290.81L277.60 290.81M277.60 290.81L285.60 290.81M285.60 290.81L291.99 290.81M53.83 297.43L61.60 297.43M61.60 297.43L69.60 297.43M269.60 297.43L277.60 297.43M277.60 297.43L285.37 297.43M60.45 304.05L61.60 304.05M61.60 304.05L69.60 304.05M269.60 304.05L277.60 304.05M277.60 304.05L278.75 304.05M67.07 310.67L69.60 310.67M269.60 310.67L272.13 310.67M39.60 251.09L39.60 257.71M39.60 257.71L39.60 264.33M39.60 264.33L39.60 270.95M39.60 270.95L39.60 277.57M39.60 277.57L39.60 284.19M45.60 251.09L45.60 257.71M45.60 257.71L45.60 264.33M45.60 264.33L45.60 270.95M45.60 270.95L45.60 277.57M45.60 277.57L45.60 284.19M45.60 284.19L45.60 289.20M53.60 251.09L53.60 257.71M53.60 257.71L53.60 264.33M53.60 264.33L53.60 270.95M53.60 270.95L53.60 277.57M53.60 277.57L53.60 284.19M53.60 284.19L53.60 290.81M53.60 290.81L53.60 297.20M61.60 251.09L61.60 257.71M61.60 257.71L61.60 264.33M61.60 264.33L61.60 270.95M61.60 270.95L61.60 277.57M61.60 277.57L61.60 284.19M61.60 284.19L61.60 290.81M61.60 290.81L61.60 297.43M61.60 297.43L61.60 304.05M69.60 251.09L69.60 257.71M69.60 257.71L69.60 264.33M69.60 264.33L69.60 270.95M69.60 270.95L69.60 277.57M69.60 277.57L69.60 284.19M69.60 284.19L69.60 290.81M69.60 290.81L69.60 297.43M69.60 297.43L69.60 304.05M69.60 304.05L69.60 310.67M269.60 251.09L269.60 257.71M269.60 257.71L269.60 264.33M269.60 264.33L269.60 270.95M269.60 270.95L269.60 277.57M269.60 277.57L269.60 284.19M269.60 284.19L269.60 290.81M269.60 290.81L269.60 297.43M269.60 297.43L269.60 304.05M269.60 304.05L269.60 310.67M277.60 251.09L277.60 257.71M277.60 257.71L277.60 264.33M277.60 264.33L277.60 270.95M277.60 270.95L277.60 277.57M277.60 277.57L277.60 284.19M277.60 284.19L277.60 290.81M277.60 290.81L277.60 297.43M277.60 297.43L277.60 304.05M285.60 251.09L285.60 257.71M285.60 257.71L285.60 264.33M285.60 264.33L285.60 270.95M285.60 270.95L285.60 277.57M285.60 277.57L285.60 284.19M285.60 284.19L285.60 290.81M285.60 290.81L285.60 297.20M293.60 251.09L293.60 257.71M293.60 257.71L293.60 264.33M293.60 264.33L293.60 270.95M293.60 270.95L293.60 277.57M293.60 277.57L293.60 284.19M293.60 284.19L293.60 289.20M299.60 251.09L299.60 257.71M299.60 257.71L299.60 264.33M299.60 264.33L299.60 270.95M299.60 270.95L299.60 277.57M299.60 277.57L299.60 284.19" stroke="#4f74d8" stroke-width="1.05" fill="none" /><path d="M101.60 154.90L109.60 154.90M109.60 154.90L117.60 154.90M117.60 154.90L125.60 154.90M125.60 154.90L133.60 154.90M133.60 154.90L141.60 154.90M141.60 154.90L149.60 154.90M149.60 154.90L157.60 154.90M157.60 154.90L165.60 154.90M165.60 154.90L173.60 154.90M173.60 154.90L181.60 154.90M181.60 154.90L189.60 154.90M189.60 154.90L197.60 154.90M197.60 154.90L205.60 154.90M205.60 154.90L213.60 154.90M213.60 154.90L221.60 154.90M221.60 154.90L229.60 154.90M229.60 154.90L237.60 154.90M101.60 161.50L109.60 161.50M109.60 161.50L117.60 161.50M117.60 161.50L125.60 161.50M125.60 161.50L133.60 161.50M133.60 161.50L141.60 161.50M141.60 161.50L149.60 161.50M149.60 161.50L157.60 161.50M157.60 161.50L165.60 161.50M165.60 161.50L173.60 161.50M173.60 161.50L181.60 161.50M181.60 161.50L189.60 161.50M189.60 161.50L197.60 161.50M197.60 161.50L205.60 161.50M205.60 161.50L213.60 161.50M213.60 161.50L221.60 161.50M221.60 161.50L229.60 161.50M229.60 161.50L237.60 161.50M101.60 168.10L109.60 168.10M109.60 168.10L117.60 168.10M117.60 168.10L125.60 168.10M125.60 168.10L133.60 168.10M133.60 168.10L141.60 168.10M141.60 168.10L149.60 168.10M149.60 168.10L157.60 168.10M157.60 168.10L165.60 168.10M165.60 168.10L173.60 168.10M173.60 168.10L181.60 168.10M181.60 168.10L189.60 168.10M189.60 168.10L197.60 168.10M197.60 168.10L205.60 168.10M205.60 168.10L213.60 168.10M213.60 168.10L221.60 168.10M221.60 168.10L229.60 168.10M229.60 168.10L237.60 168.10M101.60 174.70L109.60 174.70M109.60 174.70L117.60 174.70M117.60 174.70L125.60 174.70M125.60 174.70L133.60 174.70M133.60 174.70L141.60 174.70M141.60 174.70L149.60 174.70M149.60 174.70L157.60 174.70M157.60 174.70L165.60 174.70M165.60 174.70L173.60 174.70M173.60 174.70L181.60 174.70M181.60 174.70L189.60 174.70M189.60 174.70L197.60 174.70M197.60 174.70L205.60 174.70M205.60 174.70L213.60 174.70M213.60 174.70L221.60 174.70M221.60 174.70L229.60 174.70M229.60 174.70L237.60 174.70M101.60 181.40L109.60 181.40M109.60 181.40L117.60 181.40M117.60 181.40L125.60 181.40M125.60 181.40L133.60 181.40M133.60 181.40L141.60 181.40M141.60 181.40L149.60 181.40M149.60 181.40L157.60 181.40M157.60 181.40L165.60 181.40M165.60 181.40L173.60 181.40M173.60 181.40L181.60 181.40M181.60 181.40L189.60 181.40M189.60 181.40L197.60 181.40M197.60 181.40L205.60 181.40M205.60 181.40L213.60 181.40M213.60 181.40L221.60 181.40M221.60 181.40L229.60 181.40M229.60 181.40L237.60 181.40M101.60 188.10L109.60 188.10M109.60 188.10L117.60 188.10M117.60 188.10L125.60 188.10M125.60 188.10L133.60 188.10M133.60 188.10L141.60 188.10M141.60 188.10L149.60 188.10M149.60 188.10L157.60 188.10M157.60 188.10L165.60 188.10M165.60 188.10L173.60 188.10M173.60 188.10L181.60 188.10M181.60 188.10L189.60 188.10M189.60 188.10L197.60 188.10M197.60 188.10L205.60 188.10M205.60 188.10L213.60 188.10M213.60 188.10L221.60 188.10M221.60 188.10L229.60 188.10M229.60 188.10L237.60 188.10M39.60 194.70L45.60 194.70M45.60 194.70L53.60 194.70M53.60 194.70L61.60 194.70M61.60 194.70L69.60 194.70M69.60 194.70L77.60 194.70M77.60 194.70L85.60 194.70M85.60 194.70L93.60 194.70M93.60 194.70L101.60 194.70M101.60 194.70L109.60 194.70M109.60 194.70L117.60 194.70M117.60 194.70L125.60 194.70M125.60 194.70L133.60 194.70M133.60 194.70L141.60 194.70M141.60 194.70L149.60 194.70M149.60 194.70L157.60 194.70M157.60 194.70L165.60 194.70M165.60 194.70L173.60 194.70M173.60 194.70L181.60 194.70M181.60 194.70L189.60 194.70M189.60 194.70L197.60 194.70M197.60 194.70L205.60 194.70M205.60 194.70L213.60 194.70M213.60 194.70L221.60 194.70M221.60 194.70L229.60 194.70M229.60 194.70L237.60 194.70M237.60 194.70L245.60 194.70M245.60 194.70L253.60 194.70M253.60 194.70L261.60 194.70M261.60 194.70L269.60 194.70M269.60 194.70L277.60 194.70M277.60 194.70L285.60 194.70M285.60 194.70L293.60 194.70M293.60 194.70L299.60 194.70M39.60 201.80L45.60 201.80M45.60 201.80L53.60 201.80M53.60 201.80L61.60 201.80M61.60 201.80L69.60 201.80M69.60 201.80L77.60 201.80M77.60 201.80L85.60 201.80M85.60 201.80L93.60 201.80M93.60 201.80L101.60 201.80M101.60 201.80L109.60 201.80M109.60 201.80L117.60 201.80M117.60 201.80L125.60 201.80M125.60 201.80L133.60 201.80M133.60 201.80L141.60 201.80M141.60 201.80L149.60 201.80M149.60 201.80L157.60 201.80M157.60 201.80L165.60 201.80M165.60 201.80L173.60 201.80M173.60 201.80L181.60 201.80M181.60 201.80L189.60 201.80M189.60 201.80L197.60 201.80M197.60 201.80L205.60 201.80M205.60 201.80L213.60 201.80M213.60 201.80L221.60 201.80M221.60 201.80L229.60 201.80M229.60 201.80L237.60 201.80M237.60 201.80L245.60 201.80M245.60 201.80L253.60 201.80M253.60 201.80L261.60 201.80M261.60 201.80L269.60 201.80M269.60 201.80L277.60 201.80M277.60 201.80L285.60 201.80M285.60 201.80L293.60 201.80M293.60 201.80L299.60 201.80M39.60 204.75L45.60 204.75M45.60 204.75L53.60 204.75M53.60 204.75L61.60 204.75M61.60 204.75L69.60 204.75M69.60 204.75L77.60 204.75M77.60 204.75L85.60 204.75M85.60 204.75L93.60 204.75M93.60 204.75L101.60 204.75M101.60 204.75L109.60 204.75M109.60 204.75L117.60 204.75M117.60 204.75L125.60 204.75M125.60 204.75L133.60 204.75M133.60 204.75L141.60 204.75M141.60 204.75L149.60 204.75M149.60 204.75L157.60 204.75M157.60 204.75L165.60 204.75M165.60 204.75L173.60 204.75M173.60 204.75L181.60 204.75M181.60 204.75L189.60 204.75M189.60 204.75L197.60 204.75M197.60 204.75L205.60 204.75M205.60 204.75L213.60 204.75M213.60 204.75L221.60 204.75M221.60 204.75L229.60 204.75M229.60 204.75L237.60 204.75M237.60 204.75L245.60 204.75M245.60 204.75L253.60 204.75M253.60 204.75L261.60 204.75M261.60 204.75L269.60 204.75M269.60 204.75L277.60 204.75M277.60 204.75L285.60 204.75M285.60 204.75L293.60 204.75M293.60 204.75L299.60 204.75M39.60 211.37L45.60 211.37M45.60 211.37L53.60 211.37M53.60 211.37L61.60 211.37M61.60 211.37L69.60 211.37M69.60 211.37L77.60 211.37M77.60 211.37L85.60 211.37M85.60 211.37L93.60 211.37M93.60 211.37L101.60 211.37M101.60 211.37L109.60 211.37M109.60 211.37L117.60 211.37M117.60 211.37L125.60 211.37M125.60 211.37L133.60 211.37M133.60 211.37L141.60 211.37M141.60 211.37L149.60 211.37M149.60 211.37L157.60 211.37M157.60 211.37L165.60 211.37M165.60 211.37L173.60 211.37M173.60 211.37L181.60 211.37M181.60 211.37L189.60 211.37M189.60 211.37L197.60 211.37M197.60 211.37L205.60 211.37M205.60 211.37L213.60 211.37M213.60 211.37L221.60 211.37M221.60 211.37L229.60 211.37M229.60 211.37L237.60 211.37M237.60 211.37L245.60 211.37M245.60 211.37L253.60 211.37M253.60 211.37L261.60 211.37M261.60 211.37L269.60 211.37M269.60 211.37L277.60 211.37M277.60 211.37L285.60 211.37M285.60 211.37L293.60 211.37M293.60 211.37L299.60 211.37M39.60 217.99L45.60 217.99M45.60 217.99L53.60 217.99M53.60 217.99L61.60 217.99M61.60 217.99L69.60 217.99M69.60 217.99L77.60 217.99M77.60 217.99L85.60 217.99M85.60 217.99L93.60 217.99M93.60 217.99L101.60 217.99M101.60 217.99L109.60 217.99M109.60 217.99L117.60 217.99M117.60 217.99L125.60 217.99M125.60 217.99L133.60 217.99M133.60 217.99L141.60 217.99M141.60 217.99L149.60 217.99M149.60 217.99L157.60 217.99M157.60 217.99L165.60 217.99M165.60 217.99L173.60 217.99M173.60 217.99L181.60 217.99M181.60 217.99L189.60 217.99M189.60 217.99L197.60 217.99M197.60 217.99L205.60 217.99M205.60 217.99L213.60 217.99M213.60 217.99L221.60 217.99M221.60 217.99L229.60 217.99M229.60 217.99L237.60 217.99M237.60 217.99L245.60 217.99M245.60 217.99L253.60 217.99M253.60 217.99L261.60 217.99M261.60 217.99L269.60 217.99M269.60 217.99L277.60 217.99M277.60 217.99L285.60 217.99M285.60 217.99L293.60 217.99M293.60 217.99L299.60 217.99M39.60 224.61L45.60 224.61M45.60 224.61L53.60 224.61M53.60 224.61L61.60 224.61M61.60 224.61L69.60 224.61M69.60 224.61L77.60 224.61M77.60 224.61L85.60 224.61M85.60 224.61L93.60 224.61M93.60 224.61L101.60 224.61M101.60 224.61L109.60 224.61M109.60 224.61L117.60 224.61M117.60 224.61L125.60 224.61M125.60 224.61L133.60 224.61M133.60 224.61L141.60 224.61M141.60 224.61L149.60 224.61M149.60 224.61L157.60 224.61M157.60 224.61L165.60 224.61M165.60 224.61L173.60 224.61M173.60 224.61L181.60 224.61M181.60 224.61L189.60 224.61M189.60 224.61L197.60 224.61M197.60 224.61L205.60 224.61M205.60 224.61L213.60 224.61M213.60 224.61L221.60 224.61M221.60 224.61L229.60 224.61M229.60 224.61L237.60 224.61M237.60 224.61L245.60 224.61M245.60 224.61L253.60 224.61M253.60 224.61L261.60 224.61M261.60 224.61L269.60 224.61M269.60 224.61L277.60 224.61M277.60 224.61L285.60 224.61M285.60 224.61L293.60 224.61M293.60 224.61L299.60 224.61M39.60 231.23L45.60 231.23M45.60 231.23L53.60 231.23M53.60 231.23L61.60 231.23M61.60 231.23L69.60 231.23M69.60 231.23L77.60 231.23M77.60 231.23L85.60 231.23M85.60 231.23L93.60 231.23M93.60 231.23L101.60 231.23M101.60 231.23L109.60 231.23M109.60 231.23L117.60 231.23M117.60 231.23L125.60 231.23M125.60 231.23L133.60 231.23M133.60 231.23L141.60 231.23M141.60 231.23L149.60 231.23M149.60 231.23L157.60 231.23M157.60 231.23L165.60 231.23M165.60 231.23L173.60 231.23M173.60 231.23L181.60 231.23M181.60 231.23L189.60 231.23M189.60 231.23L197.60 231.23M197.60 231.23L205.60 231.23M205.60 231.23L213.60 231.23M213.60 231.23L221.60 231.23M221.60 231.23L229.60 231.23M229.60 231.23L237.60 231.23M237.60 231.23L245.60 231.23M245.60 231.23L253.60 231.23M253.60 231.23L261.60 231.23M261.60 231.23L269.60 231.23M269.60 231.23L277.60 231.23M277.60 231.23L285.60 231.23M285.60 231.23L293.60 231.23M293.60 231.23L299.60 231.23M39.60 237.85L45.60 237.85M45.60 237.85L53.60 237.85M53.60 237.85L61.60 237.85M61.60 237.85L69.60 237.85M69.60 237.85L77.60 237.85M77.60 237.85L85.60 237.85M85.60 237.85L93.60 237.85M93.60 237.85L101.60 237.85M101.60 237.85L109.60 237.85M109.60 237.85L117.60 237.85M117.60 237.85L125.60 237.85M125.60 237.85L133.60 237.85M133.60 237.85L141.60 237.85M141.60 237.85L149.60 237.85M149.60 237.85L157.60 237.85M157.60 237.85L165.60 237.85M165.60 237.85L173.60 237.85M173.60 237.85L181.60 237.85M181.60 237.85L189.60 237.85M189.60 237.85L197.60 237.85M197.60 237.85L205.60 237.85M205.60 237.85L213.60 237.85M213.60 237.85L221.60 237.85M221.60 237.85L229.60 237.85M229.60 237.85L237.60 237.85M237.60 237.85L245.60 237.85M245.60 237.85L253.60 237.85M253.60 237.85L261.60 237.85M261.60 237.85L269.60 237.85M269.60 237.85L277.60 237.85M277.60 237.85L285.60 237.85M285.60 237.85L293.60 237.85M293.60 237.85L299.60 237.85M39.60 244.47L45.60 244.47M45.60 244.47L53.60 244.47M53.60 244.47L61.60 244.47M61.60 244.47L69.60 244.47M69.60 244.47L77.60 244.47M77.60 244.47L85.60 244.47M85.60 244.47L93.60 244.47M93.60 244.47L101.60 244.47M101.60 244.47L109.60 244.47M109.60 244.47L117.60 244.47M117.60 244.47L125.60 244.47M125.60 244.47L133.60 244.47M133.60 244.47L141.60 244.47M141.60 244.47L149.60 244.47M149.60 244.47L157.60 244.47M157.60 244.47L165.60 244.47M165.60 244.47L173.60 244.47M173.60 244.47L181.60 244.47M181.60 244.47L189.60 244.47M189.60 244.47L197.60 244.47M197.60 244.47L205.60 244.47M205.60 244.47L213.60 244.47M213.60 244.47L221.60 244.47M221.60 244.47L229.60 244.47M229.60 244.47L237.60 244.47M237.60 244.47L245.60 244.47M245.60 244.47L253.60 244.47M253.60 244.47L261.60 244.47M261.60 244.47L269.60 244.47M269.60 244.47L277.60 244.47M277.60 244.47L285.60 244.47M285.60 244.47L293.60 244.47M293.60 244.47L299.60 244.47M69.60 251.09L77.60 251.09M77.60 251.09L85.60 251.09M85.60 251.09L93.60 251.09M93.60 251.09L101.60 251.09M101.60 251.09L109.60 251.09M109.60 251.09L117.60 251.09M117.60 251.09L125.60 251.09M125.60 251.09L133.60 251.09M133.60 251.09L141.60 251.09M141.60 251.09L149.60 251.09M149.60 251.09L157.60 251.09M157.60 251.09L165.60 251.09M165.60 251.09L173.60 251.09M173.60 251.09L181.60 251.09M181.60 251.09L189.60 251.09M189.60 251.09L197.60 251.09M197.60 251.09L205.60 251.09M205.60 251.09L213.60 251.09M213.60 251.09L221.60 251.09M221.60 251.09L229.60 251.09M229.60 251.09L237.60 251.09M237.60 251.09L245.60 251.09M245.60 251.09L253.60 251.09M253.60 251.09L261.60 251.09M261.60 251.09L269.60 251.09M69.60 257.71L77.60 257.71M77.60 257.71L85.60 257.71M85.60 257.71L93.60 257.71M93.60 257.71L101.60 257.71M101.60 257.71L109.60 257.71M109.60 257.71L117.60 257.71M117.60 257.71L125.60 257.71M125.60 257.71L133.60 257.71M133.60 257.71L141.60 257.71M141.60 257.71L149.60 257.71M149.60 257.71L157.60 257.71M157.60 257.71L165.60 257.71M165.60 257.71L173.60 257.71M173.60 257.71L181.60 257.71M181.60 257.71L189.60 257.71M189.60 257.71L197.60 257.71M197.60 257.71L205.60 257.71M205.60 257.71L213.60 257.71M213.60 257.71L221.60 257.71M221.60 257.71L229.60 257.71M229.60 257.71L237.60 257.71M237.60 257.71L245.60 257.71M245.60 257.71L253.60 257.71M253.60 257.71L261.60 257.71M261.60 257.71L269.60 257.71M69.60 264.33L77.60 264.33M77.60 264.33L85.60 264.33M85.60 264.33L93.60 264.33M93.60 264.33L101.60 264.33M101.60 264.33L109.60 264.33M109.60 264.33L117.60 264.33M117.60 264.33L125.60 264.33M125.60 264.33L133.60 264.33M133.60 264.33L141.60 264.33M141.60 264.33L149.60 264.33M149.60 264.33L157.60 264.33M157.60 264.33L165.60 264.33M165.60 264.33L173.60 264.33M173.60 264.33L181.60 264.33M181.60 264.33L189.60 264.33M189.60 264.33L197.60 264.33M197.60 264.33L205.60 264.33M205.60 264.33L213.60 264.33M213.60 264.33L221.60 264.33M221.60 264.33L229.60 264.33M229.60 264.33L237.60 264.33M237.60 264.33L245.60 264.33M245.60 264.33L253.60 264.33M253.60 264.33L261.60 264.33M261.60 264.33L269.60 264.33M69.60 270.95L77.60 270.95M77.60 270.95L85.60 270.95M85.60 270.95L93.60 270.95M93.60 270.95L101.60 270.95M101.60 270.95L109.60 270.95M109.60 270.95L117.60 270.95M117.60 270.95L125.60 270.95M125.60 270.95L133.60 270.95M133.60 270.95L141.60 270.95M141.60 270.95L149.60 270.95M149.60 270.95L157.60 270.95M157.60 270.95L165.60 270.95M165.60 270.95L173.60 270.95M173.60 270.95L181.60 270.95M181.60 270.95L189.60 270.95M189.60 270.95L197.60 270.95M197.60 270.95L205.60 270.95M205.60 270.95L213.60 270.95M213.60 270.95L221.60 270.95M221.60 270.95L229.60 270.95M229.60 270.95L237.60 270.95M237.60 270.95L245.60 270.95M245.60 270.95L253.60 270.95M253.60 270.95L261.60 270.95M261.60 270.95L269.60 270.95M69.60 277.57L77.60 277.57M77.60 277.57L85.60 277.57M85.60 277.57L93.60 277.57M93.60 277.57L101.60 277.57M101.60 277.57L109.60 277.57M109.60 277.57L117.60 277.57M117.60 277.57L125.60 277.57M125.60 277.57L133.60 277.57M133.60 277.57L141.60 277.57M141.60 277.57L149.60 277.57M149.60 277.57L157.60 277.57M157.60 277.57L165.60 277.57M165.60 277.57L173.60 277.57M173.60 277.57L181.60 277.57M181.60 277.57L189.60 277.57M189.60 277.57L197.60 277.57M197.60 277.57L205.60 277.57M205.60 277.57L213.60 277.57M213.60 277.57L221.60 277.57M221.60 277.57L229.60 277.57M229.60 277.57L237.60 277.57M237.60 277.57L245.60 277.57M245.60 277.57L253.60 277.57M253.60 277.57L261.60 277.57M261.60 277.57L269.60 277.57M69.60 284.19L77.60 284.19M77.60 284.19L85.60 284.19M85.60 284.19L93.60 284.19M93.60 284.19L101.60 284.19M101.60 284.19L109.60 284.19M109.60 284.19L117.60 284.19M117.60 284.19L125.60 284.19M125.60 284.19L133.60 284.19M133.60 284.19L141.60 284.19M141.60 284.19L149.60 284.19M149.60 284.19L157.60 284.19M157.60 284.19L165.60 284.19M165.60 284.19L173.60 284.19M173.60 284.19L181.60 284.19M181.60 284.19L189.60 284.19M189.60 284.19L197.60 284.19M197.60 284.19L205.60 284.19M205.60 284.19L213.60 284.19M213.60 284.19L221.60 284.19M221.60 284.19L229.60 284.19M229.60 284.19L237.60 284.19M237.60 284.19L245.60 284.19M245.60 284.19L253.60 284.19M253.60 284.19L261.60 284.19M261.60 284.19L269.60 284.19M69.60 290.81L77.60 290.81M77.60 290.81L85.60 290.81M85.60 290.81L93.60 290.81M93.60 290.81L101.60 290.81M101.60 290.81L109.60 290.81M109.60 290.81L117.60 290.81M117.60 290.81L125.60 290.81M125.60 290.81L133.60 290.81M133.60 290.81L141.60 290.81M141.60 290.81L149.60 290.81M149.60 290.81L157.60 290.81M157.60 290.81L165.60 290.81M165.60 290.81L173.60 290.81M173.60 290.81L181.60 290.81M181.60 290.81L189.60 290.81M189.60 290.81L197.60 290.81M197.60 290.81L205.60 290.81M205.60 290.81L213.60 290.81M213.60 290.81L221.60 290.81M221.60 290.81L229.60 290.81M229.60 290.81L237.60 290.81M237.60 290.81L245.60 290.81M245.60 290.81L253.60 290.81M253.60 290.81L261.60 290.81M261.60 290.81L269.60 290.81M69.60 297.43L77.60 297.43M77.60 297.43L85.60 297.43M85.60 297.43L93.60 297.43M93.60 297.43L101.60 297.43M101.60 297.43L109.60 297.43M109.60 297.43L117.60 297.43M117.60 297.43L125.60 297.43M125.60 297.43L133.60 297.43M133.60 297.43L141.60 297.43M141.60 297.43L149.60 297.43M149.60 297.43L157.60 297.43M157.60 297.43L165.60 297.43M165.60 297.43L173.60 297.43M173.60 297.43L181.60 297.43M181.60 297.43L189.60 297.43M189.60 297.43L197.60 297.43M197.60 297.43L205.60 297.43M205.60 297.43L213.60 297.43M213.60 297.43L221.60 297.43M221.60 297.43L229.60 297.43M229.60 297.43L237.60 297.43M237.60 297.43L245.60 297.43M245.60 297.43L253.60 297.43M253.60 297.43L261.60 297.43M261.60 297.43L269.60 297.43M69.60 304.05L77.60 304.05M77.60 304.05L85.60 304.05M85.60 304.05L93.60 304.05M93.60 304.05L101.60 304.05M101.60 304.05L109.60 304.05M109.60 304.05L117.60 304.05M117.60 304.05L125.60 304.05M125.60 304.05L133.60 304.05M133.60 304.05L141.60 304.05M141.60 304.05L149.60 304.05M149.60 304.05L157.60 304.05M157.60 304.05L165.60 304.05M165.60 304.05L173.60 304.05M173.60 304.05L181.60 304.05M181.60 304.05L189.60 304.05M189.60 304.05L197.60 304.05M197.60 304.05L205.60 304.05M205.60 304.05L213.60 304.05M213.60 304.05L221.60 304.05M221.60 304.05L229.60 304.05M229.60 304.05L237.60 304.05M237.60 304.05L245.60 304.05M245.60 304.05L253.60 304.05M253.60 304.05L261.60 304.05M261.60 304.05L269.60 304.05M69.60 310.67L77.60 310.67M77.60 310.67L85.60 310.67M85.60 310.67L93.60 310.67M93.60 310.67L101.60 310.67M101.60 310.67L109.60 310.67M109.60 310.67L117.60 310.67M117.60 310.67L125.60 310.67M125.60 310.67L133.60 310.67M133.60 310.67L141.60 310.67M141.60 310.67L149.60 310.67M149.60 310.67L157.60 310.67M157.60 310.67L165.60 310.67M165.60 310.67L173.60 310.67M173.60 310.67L181.60 310.67M181.60 310.67L189.60 310.67M189.60 310.67L197.60 310.67M197.60 310.67L205.60 310.67M205.60 310.67L213.60 310.67M213.60 310.67L221.60 310.67M221.60 310.67L229.60 310.67M229.60 310.67L237.60 310.67M237.60 310.67L245.60 310.67M245.60 310.67L253.60 310.67M253.60 310.67L261.60 310.67M261.60 310.67L269.60 310.67M39.60 188.10L39.60 194.70M39.60 194.70L39.60 201.80M39.60 201.80L39.60 204.75M39.60 204.75L39.60 211.37M39.60 211.37L39.60 217.99M39.60 217.99L39.60 224.61M39.60 224.61L39.60 231.23M39.60 231.23L39.60 237.85M39.60 237.85L39.60 244.47M39.60 244.47L39.60 251.09M45.60 188.10L45.60 194.70M45.60 194.70L45.60 201.80M45.60 201.80L45.60 204.75M45.60 204.75L45.60 211.37M45.60 211.37L45.60 217.99M45.60 217.99L45.60 224.61M45.60 224.61L45.60 231.23M45.60 231.23L45.60 237.85M45.60 237.85L45.60 244.47M45.60 244.47L45.60 251.09M53.60 188.10L53.60 194.70M53.60 194.70L53.60 201.80M53.60 201.80L53.60 204.75M53.60 204.75L53.60 211.37M53.60 211.37L53.60 217.99M53.60 217.99L53.60 224.61M53.60 224.61L53.60 231.23M53.60 231.23L53.60 237.85M53.60 237.85L53.60 244.47M53.60 244.47L53.60 251.09M61.60 188.10L61.60 194.70M61.60 194.70L61.60 201.80M61.60 201.80L61.60 204.75M61.60 204.75L61.60 211.37M61.60 211.37L61.60 217.99M61.60 217.99L61.60 224.61M61.60 224.61L61.60 231.23M61.60 231.23L61.60 237.85M61.60 237.85L61.60 244.47M61.60 244.47L61.60 251.09M69.60 188.10L69.60 194.70M69.60 194.70L69.60 201.80M69.60 201.80L69.60 204.75M69.60 204.75L69.60 211.37M69.60 211.37L69.60 217.99M69.60 217.99L69.60 224.61M69.60 224.61L69.60 231.23M69.60 231.23L69.60 237.85M69.60 237.85L69.60 244.47M69.60 244.47L69.60 251.09M77.60 188.10L77.60 194.70M77.60 194.70L77.60 201.80M77.60 201.80L77.60 204.75M77.60 204.75L77.60 211.37M77.60 211.37L77.60 217.99M77.60 217.99L77.60 224.61M77.60 224.61L77.60 231.23M77.60 231.23L77.60 237.85M77.60 237.85L77.60 244.47M77.60 244.47L77.60 251.09M77.60 251.09L77.60 257.71M77.60 257.71L77.60 264.33M77.60 264.33L77.60 270.95M77.60 270.95L77.60 277.57M77.60 277.57L77.60 284.19M77.60 284.19L77.60 290.81M77.60 290.81L77.60 297.43M77.60 297.43L77.60 304.05M77.60 304.05L77.60 310.67M85.60 188.10L85.60 194.70M85.60 194.70L85.60 201.80M85.60 201.80L85.60 204.75M85.60 204.75L85.60 211.37M85.60 211.37L85.60 217.99M85.60 217.99L85.60 224.61M85.60 224.61L85.60 231.23M85.60 231.23L85.60 237.85M85.60 237.85L85.60 244.47M85.60 244.47L85.60 251.09M85.60 251.09L85.60 257.71M85.60 257.71L85.60 264.33M85.60 264.33L85.60 270.95M85.60 270.95L85.60 277.57M85.60 277.57L85.60 284.19M85.60 284.19L85.60 290.81M85.60 290.81L85.60 297.43M85.60 297.43L85.60 304.05M85.60 304.05L85.60 310.67M93.60 188.10L93.60 194.70M93.60 194.70L93.60 201.80M93.60 201.80L93.60 204.75M93.60 204.75L93.60 211.37M93.60 211.37L93.60 217.99M93.60 217.99L93.60 224.61M93.60 224.61L93.60 231.23M93.60 231.23L93.60 237.85M93.60 237.85L93.60 244.47M93.60 244.47L93.60 251.09M93.60 251.09L93.60 257.71M93.60 257.71L93.60 264.33M93.60 264.33L93.60 270.95M93.60 270.95L93.60 277.57M93.60 277.57L93.60 284.19M93.60 284.19L93.60 290.81M93.60 290.81L93.60 297.43M93.60 297.43L93.60 304.05M93.60 304.05L93.60 310.67M101.60 188.10L101.60 194.70M101.60 194.70L101.60 201.80M101.60 201.80L101.60 204.75M101.60 204.75L101.60 211.37M101.60 211.37L101.60 217.99M101.60 217.99L101.60 224.61M101.60 224.61L101.60 231.23M101.60 231.23L101.60 237.85M101.60 237.85L101.60 244.47M101.60 244.47L101.60 251.09M101.60 251.09L101.60 257.71M101.60 257.71L101.60 264.33M101.60 264.33L101.60 270.95M101.60 270.95L101.60 277.57M101.60 277.57L101.60 284.19M101.60 284.19L101.60 290.81M101.60 290.81L101.60 297.43M101.60 297.43L101.60 304.05M101.60 304.05L101.60 310.67M109.60 148.25L109.60 154.90M109.60 154.90L109.60 161.50M109.60 161.50L109.60 168.10M109.60 168.10L109.60 174.70M109.60 174.70L109.60 181.40M109.60 181.40L109.60 188.10M109.60 188.10L109.60 194.70M109.60 194.70L109.60 201.80M109.60 201.80L109.60 204.75M109.60 204.75L109.60 211.37M109.60 211.37L109.60 217.99M109.60 217.99L109.60 224.61M109.60 224.61L109.60 231.23M109.60 231.23L109.60 237.85M109.60 237.85L109.60 244.47M109.60 244.47L109.60 251.09M109.60 251.09L109.60 257.71M109.60 257.71L109.60 264.33M109.60 264.33L109.60 270.95M109.60 270.95L109.60 277.57M109.60 277.57L109.60 284.19M109.60 284.19L109.60 290.81M109.60 290.81L109.60 297.43M109.60 297.43L109.60 304.05M109.60 304.05L109.60 310.67M117.60 148.25L117.60 154.90M117.60 154.90L117.60 161.50M117.60 161.50L117.60 168.10M117.60 168.10L117.60 174.70M117.60 174.70L117.60 181.40M117.60 181.40L117.60 188.10M117.60 188.10L117.60 194.70M117.60 194.70L117.60 201.80M117.60 201.80L117.60 204.75M117.60 204.75L117.60 211.37M117.60 211.37L117.60 217.99M117.60 217.99L117.60 224.61M117.60 224.61L117.60 231.23M117.60 231.23L117.60 237.85M117.60 237.85L117.60 244.47M117.60 244.47L117.60 251.09M117.60 251.09L117.60 257.71M117.60 257.71L117.60 264.33M117.60 264.33L117.60 270.95M117.60 270.95L117.60 277.57M117.60 277.57L117.60 284.19M117.60 284.19L117.60 290.81M117.60 290.81L117.60 297.43M117.60 297.43L117.60 304.05M117.60 304.05L117.60 310.67M125.60 148.25L125.60 154.90M125.60 154.90L125.60 161.50M125.60 161.50L125.60 168.10M125.60 168.10L125.60 174.70M125.60 174.70L125.60 181.40M125.60 181.40L125.60 188.10M125.60 188.10L125.60 194.70M125.60 194.70L125.60 201.80M125.60 201.80L125.60 204.75M125.60 204.75L125.60 211.37M125.60 211.37L125.60 217.99M125.60 217.99L125.60 224.61M125.60 224.61L125.60 231.23M125.60 231.23L125.60 237.85M125.60 237.85L125.60 244.47M125.60 244.47L125.60 251.09M125.60 251.09L125.60 257.71M125.60 257.71L125.60 264.33M125.60 264.33L125.60 270.95M125.60 270.95L125.60 277.57M125.60 277.57L125.60 284.19M125.60 284.19L125.60 290.81M125.60 290.81L125.60 297.43M125.60 297.43L125.60 304.05M125.60 304.05L125.60 310.67M133.60 148.25L133.60 154.90M133.60 154.90L133.60 161.50M133.60 161.50L133.60 168.10M133.60 168.10L133.60 174.70M133.60 174.70L133.60 181.40M133.60 181.40L133.60 188.10M133.60 188.10L133.60 194.70M133.60 194.70L133.60 201.80M133.60 201.80L133.60 204.75M133.60 204.75L133.60 211.37M133.60 211.37L133.60 217.99M133.60 217.99L133.60 224.61M133.60 224.61L133.60 231.23M133.60 231.23L133.60 237.85M133.60 237.85L133.60 244.47M133.60 244.47L133.60 251.09M133.60 251.09L133.60 257.71M133.60 257.71L133.60 264.33M133.60 264.33L133.60 270.95M133.60 270.95L133.60 277.57M133.60 277.57L133.60 284.19M133.60 284.19L133.60 290.81M133.60 290.81L133.60 297.43M133.60 297.43L133.60 304.05M133.60 304.05L133.60 310.67M141.60 148.25L141.60 154.90M141.60 154.90L141.60 161.50M141.60 161.50L141.60 168.10M141.60 168.10L141.60 174.70M141.60 174.70L141.60 181.40M141.60 181.40L141.60 188.10M141.60 188.10L141.60 194.70M141.60 194.70L141.60 201.80M141.60 201.80L141.60 204.75M141.60 204.75L141.60 211.37M141.60 211.37L141.60 217.99M141.60 217.99L141.60 224.61M141.60 224.61L141.60 231.23M141.60 231.23L141.60 237.85M141.60 237.85L141.60 244.47M141.60 244.47L141.60 251.09M141.60 251.09L141.60 257.71M141.60 257.71L141.60 264.33M141.60 264.33L141.60 270.95M141.60 270.95L141.60 277.57M141.60 277.57L141.60 284.19M141.60 284.19L141.60 290.81M141.60 290.81L141.60 297.43M141.60 297.43L141.60 304.05M141.60 304.05L141.60 310.67M149.60 148.25L149.60 154.90M149.60 154.90L149.60 161.50M149.60 161.50L149.60 168.10M149.60 168.10L149.60 174.70M149.60 174.70L149.60 181.40M149.60 181.40L149.60 188.10M149.60 188.10L149.60 194.70M149.60 194.70L149.60 201.80M149.60 201.80L149.60 204.75M149.60 204.75L149.60 211.37M149.60 211.37L149.60 217.99M149.60 217.99L149.60 224.61M149.60 224.61L149.60 231.23M149.60 231.23L149.60 237.85M149.60 237.85L149.60 244.47M149.60 244.47L149.60 251.09M149.60 251.09L149.60 257.71M149.60 257.71L149.60 264.33M149.60 264.33L149.60 270.95M149.60 270.95L149.60 277.57M149.60 277.57L149.60 284.19M149.60 284.19L149.60 290.81M149.60 290.81L149.60 297.43M149.60 297.43L149.60 304.05M149.60 304.05L149.60 310.67M157.60 148.25L157.60 154.90M157.60 154.90L157.60 161.50M157.60 161.50L157.60 168.10M157.60 168.10L157.60 174.70M157.60 174.70L157.60 181.40M157.60 181.40L157.60 188.10M157.60 188.10L157.60 194.70M157.60 194.70L157.60 201.80M157.60 201.80L157.60 204.75M157.60 204.75L157.60 211.37M157.60 211.37L157.60 217.99M157.60 217.99L157.60 224.61M157.60 224.61L157.60 231.23M157.60 231.23L157.60 237.85M157.60 237.85L157.60 244.47M157.60 244.47L157.60 251.09M157.60 251.09L157.60 257.71M157.60 257.71L157.60 264.33M157.60 264.33L157.60 270.95M157.60 270.95L157.60 277.57M157.60 277.57L157.60 284.19M157.60 284.19L157.60 290.81M157.60 290.81L157.60 297.43M157.60 297.43L157.60 304.05M157.60 304.05L157.60 310.67M165.60 148.25L165.60 154.90M165.60 154.90L165.60 161.50M165.60 161.50L165.60 168.10M165.60 168.10L165.60 174.70M165.60 174.70L165.60 181.40M165.60 181.40L165.60 188.10M165.60 188.10L165.60 194.70M165.60 194.70L165.60 201.80M165.60 201.80L165.60 204.75M165.60 204.75L165.60 211.37M165.60 211.37L165.60 217.99M165.60 217.99L165.60 224.61M165.60 224.61L165.60 231.23M165.60 231.23L165.60 237.85M165.60 237.85L165.60 244.47M165.60 244.47L165.60 251.09M165.60 251.09L165.60 257.71M165.60 257.71L165.60 264.33M165.60 264.33L165.60 270.95M165.60 270.95L165.60 277.57M165.60 277.57L165.60 284.19M165.60 284.19L165.60 290.81M165.60 290.81L165.60 297.43M165.60 297.43L165.60 304.05M165.60 304.05L165.60 310.67M173.60 148.25L173.60 154.90M173.60 154.90L173.60 161.50M173.60 161.50L173.60 168.10M173.60 168.10L173.60 174.70M173.60 174.70L173.60 181.40M173.60 181.40L173.60 188.10M173.60 188.10L173.60 194.70M173.60 194.70L173.60 201.80M173.60 201.80L173.60 204.75M173.60 204.75L173.60 211.37M173.60 211.37L173.60 217.99M173.60 217.99L173.60 224.61M173.60 224.61L173.60 231.23M173.60 231.23L173.60 237.85M173.60 237.85L173.60 244.47M173.60 244.47L173.60 251.09M173.60 251.09L173.60 257.71M173.60 257.71L173.60 264.33M173.60 264.33L173.60 270.95M173.60 270.95L173.60 277.57M173.60 277.57L173.60 284.19M173.60 284.19L173.60 290.81M173.60 290.81L173.60 297.43M173.60 297.43L173.60 304.05M173.60 304.05L173.60 310.67M181.60 148.25L181.60 154.90M181.60 154.90L181.60 161.50M181.60 161.50L181.60 168.10M181.60 168.10L181.60 174.70M181.60 174.70L181.60 181.40M181.60 181.40L181.60 188.10M181.60 188.10L181.60 194.70M181.60 194.70L181.60 201.80M181.60 201.80L181.60 204.75M181.60 204.75L181.60 211.37M181.60 211.37L181.60 217.99M181.60 217.99L181.60 224.61M181.60 224.61L181.60 231.23M181.60 231.23L181.60 237.85M181.60 237.85L181.60 244.47M181.60 244.47L181.60 251.09M181.60 251.09L181.60 257.71M181.60 257.71L181.60 264.33M181.60 264.33L181.60 270.95M181.60 270.95L181.60 277.57M181.60 277.57L181.60 284.19M181.60 284.19L181.60 290.81M181.60 290.81L181.60 297.43M181.60 297.43L181.60 304.05M181.60 304.05L181.60 310.67M189.60 148.25L189.60 154.90M189.60 154.90L189.60 161.50M189.60 161.50L189.60 168.10M189.60 168.10L189.60 174.70M189.60 174.70L189.60 181.40M189.60 181.40L189.60 188.10M189.60 188.10L189.60 194.70M189.60 194.70L189.60 201.80M189.60 201.80L189.60 204.75M189.60 204.75L189.60 211.37M189.60 211.37L189.60 217.99M189.60 217.99L189.60 224.61M189.60 224.61L189.60 231.23M189.60 231.23L189.60 237.85M189.60 237.85L189.60 244.47M189.60 244.47L189.60 251.09M189.60 251.09L189.60 257.71M189.60 257.71L189.60 264.33M189.60 264.33L189.60 270.95M189.60 270.95L189.60 277.57M189.60 277.57L189.60 284.19M189.60 284.19L189.60 290.81M189.60 290.81L189.60 297.43M189.60 297.43L189.60 304.05M189.60 304.05L189.60 310.67M197.60 148.25L197.60 154.90M197.60 154.90L197.60 161.50M197.60 161.50L197.60 168.10M197.60 168.10L197.60 174.70M197.60 174.70L197.60 181.40M197.60 181.40L197.60 188.10M197.60 188.10L197.60 194.70M197.60 194.70L197.60 201.80M197.60 201.80L197.60 204.75M197.60 204.75L197.60 211.37M197.60 211.37L197.60 217.99M197.60 217.99L197.60 224.61M197.60 224.61L197.60 231.23M197.60 231.23L197.60 237.85M197.60 237.85L197.60 244.47M197.60 244.47L197.60 251.09M197.60 251.09L197.60 257.71M197.60 257.71L197.60 264.33M197.60 264.33L197.60 270.95M197.60 270.95L197.60 277.57M197.60 277.57L197.60 284.19M197.60 284.19L197.60 290.81M197.60 290.81L197.60 297.43M197.60 297.43L197.60 304.05M197.60 304.05L197.60 310.67M205.60 148.25L205.60 154.90M205.60 154.90L205.60 161.50M205.60 161.50L205.60 168.10M205.60 168.10L205.60 174.70M205.60 174.70L205.60 181.40M205.60 181.40L205.60 188.10M205.60 188.10L205.60 194.70M205.60 194.70L205.60 201.80M205.60 201.80L205.60 204.75M205.60 204.75L205.60 211.37M205.60 211.37L205.60 217.99M205.60 217.99L205.60 224.61M205.60 224.61L205.60 231.23M205.60 231.23L205.60 237.85M205.60 237.85L205.60 244.47M205.60 244.47L205.60 251.09M205.60 251.09L205.60 257.71M205.60 257.71L205.60 264.33M205.60 264.33L205.60 270.95M205.60 270.95L205.60 277.57M205.60 277.57L205.60 284.19M205.60 284.19L205.60 290.81M205.60 290.81L205.60 297.43M205.60 297.43L205.60 304.05M205.60 304.05L205.60 310.67M213.60 148.25L213.60 154.90M213.60 154.90L213.60 161.50M213.60 161.50L213.60 168.10M213.60 168.10L213.60 174.70M213.60 174.70L213.60 181.40M213.60 181.40L213.60 188.10M213.60 188.10L213.60 194.70M213.60 194.70L213.60 201.80M213.60 201.80L213.60 204.75M213.60 204.75L213.60 211.37M213.60 211.37L213.60 217.99M213.60 217.99L213.60 224.61M213.60 224.61L213.60 231.23M213.60 231.23L213.60 237.85M213.60 237.85L213.60 244.47M213.60 244.47L213.60 251.09M213.60 251.09L213.60 257.71M213.60 257.71L213.60 264.33M213.60 264.33L213.60 270.95M213.60 270.95L213.60 277.57M213.60 277.57L213.60 284.19M213.60 284.19L213.60 290.81M213.60 290.81L213.60 297.43M213.60 297.43L213.60 304.05M213.60 304.05L213.60 310.67M221.60 148.25L221.60 154.90M221.60 154.90L221.60 161.50M221.60 161.50L221.60 168.10M221.60 168.10L221.60 174.70M221.60 174.70L221.60 181.40M221.60 181.40L221.60 188.10M221.60 188.10L221.60 194.70M221.60 194.70L221.60 201.80M221.60 201.80L221.60 204.75M221.60 204.75L221.60 211.37M221.60 211.37L221.60 217.99M221.60 217.99L221.60 224.61M221.60 224.61L221.60 231.23M221.60 231.23L221.60 237.85M221.60 237.85L221.60 244.47M221.60 244.47L221.60 251.09M221.60 251.09L221.60 257.71M221.60 257.71L221.60 264.33M221.60 264.33L221.60 270.95M221.60 270.95L221.60 277.57M221.60 277.57L221.60 284.19M221.60 284.19L221.60 290.81M221.60 290.81L221.60 297.43M221.60 297.43L221.60 304.05M221.60 304.05L221.60 310.67M229.60 148.25L229.60 154.90M229.60 154.90L229.60 161.50M229.60 161.50L229.60 168.10M229.60 168.10L229.60 174.70M229.60 174.70L229.60 181.40M229.60 181.40L229.60 188.10M229.60 188.10L229.60 194.70M229.60 194.70L229.60 201.80M229.60 201.80L229.60 204.75M229.60 204.75L229.60 211.37M229.60 211.37L229.60 217.99M229.60 217.99L229.60 224.61M229.60 224.61L229.60 231.23M229.60 231.23L229.60 237.85M229.60 237.85L229.60 244.47M229.60 244.47L229.60 251.09M229.60 251.09L229.60 257.71M229.60 257.71L229.60 264.33M229.60 264.33L229.60 270.95M229.60 270.95L229.60 277.57M229.60 277.57L229.60 284.19M229.60 284.19L229.60 290.81M229.60 290.81L229.60 297.43M229.60 297.43L229.60 304.05M229.60 304.05L229.60 310.67M237.60 188.10L237.60 194.70M237.60 194.70L237.60 201.80M237.60 201.80L237.60 204.75M237.60 204.75L237.60 211.37M237.60 211.37L237.60 217.99M237.60 217.99L237.60 224.61M237.60 224.61L237.60 231.23M237.60 231.23L237.60 237.85M237.60 237.85L237.60 244.47M237.60 244.47L237.60 251.09M237.60 251.09L237.60 257.71M237.60 257.71L237.60 264.33M237.60 264.33L237.60 270.95M237.60 270.95L237.60 277.57M237.60 277.57L237.60 284.19M237.60 284.19L237.60 290.81M237.60 290.81L237.60 297.43M237.60 297.43L237.60 304.05M237.60 304.05L237.60 310.67M245.60 188.10L245.60 194.70M245.60 194.70L245.60 201.80M245.60 201.80L245.60 204.75M245.60 204.75L245.60 211.37M245.60 211.37L245.60 217.99M245.60 217.99L245.60 224.61M245.60 224.61L245.60 231.23M245.60 231.23L245.60 237.85M245.60 237.85L245.60 244.47M245.60 244.47L245.60 251.09M245.60 251.09L245.60 257.71M245.60 257.71L245.60 264.33M245.60 264.33L245.60 270.95M245.60 270.95L245.60 277.57M245.60 277.57L245.60 284.19M245.60 284.19L245.60 290.81M245.60 290.81L245.60 297.43M245.60 297.43L245.60 304.05M245.60 304.05L245.60 310.67M253.60 188.10L253.60 194.70M253.60 194.70L253.60 201.80M253.60 201.80L253.60 204.75M253.60 204.75L253.60 211.37M253.60 211.37L253.60 217.99M253.60 217.99L253.60 224.61M253.60 224.61L253.60 231.23M253.60 231.23L253.60 237.85M253.60 237.85L253.60 244.47M253.60 244.47L253.60 251.09M253.60 251.09L253.60 257.71M253.60 257.71L253.60 264.33M253.60 264.33L253.60 270.95M253.60 270.95L253.60 277.57M253.60 277.57L253.60 284.19M253.60 284.19L253.60 290.81M253.60 290.81L253.60 297.43M253.60 297.43L253.60 304.05M253.60 304.05L253.60 310.67M261.60 188.10L261.60 194.70M261.60 194.70L261.60 201.80M261.60 201.80L261.60 204.75M261.60 204.75L261.60 211.37M261.60 211.37L261.60 217.99M261.60 217.99L261.60 224.61M261.60 224.61L261.60 231.23M261.60 231.23L261.60 237.85M261.60 237.85L261.60 244.47M261.60 244.47L261.60 251.09M261.60 251.09L261.60 257.71M261.60 257.71L261.60 264.33M261.60 264.33L261.60 270.95M261.60 270.95L261.60 277.57M261.60 277.57L261.60 284.19M261.60 284.19L261.60 290.81M261.60 290.81L261.60 297.43M261.60 297.43L261.60 304.05M261.60 304.05L261.60 310.67M269.60 188.10L269.60 194.70M269.60 194.70L269.60 201.80M269.60 201.80L269.60 204.75M269.60 204.75L269.60 211.37M269.60 211.37L269.60 217.99M269.60 217.99L269.60 224.61M269.60 224.61L269.60 231.23M269.60 231.23L269.60 237.85M269.60 237.85L269.60 244.47M269.60 244.47L269.60 251.09M277.60 188.10L277.60 194.70M277.60 194.70L277.60 201.80M277.60 201.80L277.60 204.75M277.60 204.75L277.60 211.37M277.60 211.37L277.60 217.99M277.60 217.99L277.60 224.61M277.60 224.61L277.60 231.23M277.60 231.23L277.60 237.85M277.60 237.85L277.60 244.47M277.60 244.47L277.60 251.09M285.60 188.10L285.60 194.70M285.60 194.70L285.60 201.80M285.60 201.80L285.60 204.75M285.60 204.75L285.60 211.37M285.60 211.37L285.60 217.99M285.60 217.99L285.60 224.61M285.60 224.61L285.60 231.23M285.60 231.23L285.60 237.85M285.60 237.85L285.60 244.47M285.60 244.47L285.60 251.09M293.60 188.10L293.60 194.70M293.60 194.70L293.60 201.80M293.60 201.80L293.60 204.75M293.60 204.75L293.60 211.37M293.60 211.37L293.60 217.99M293.60 217.99L293.60 224.61M293.60 224.61L293.60 231.23M293.60 231.23L293.60 237.85M293.60 237.85L293.60 244.47M293.60 244.47L293.60 251.09M299.60 188.10L299.60 194.70M299.60 194.70L299.60 201.80M299.60 201.80L299.60 204.75M299.60 204.75L299.60 211.37M299.60 211.37L299.60 217.99M299.60 217.99L299.60 224.61M299.60 224.61L299.60 231.23M299.60 231.23L299.60 237.85M299.60 237.85L299.60 244.47M299.60 244.47L299.60 251.09" stroke="#14bc5c" stroke-width="1.28" fill="none" /><path d="M50.21 284.19L50.21 290.81M288.99 284.19L288.99 290.81M56.83 290.81L56.83 297.43M282.37 290.81L282.37 297.43M63.45 297.43L63.45 304.05M275.75 297.43L275.75 304.05M70.07 304.05L70.07 310.67M269.13 304.05L269.13 310.67" stroke="#4f74d8" stroke-width="1.0" fill="none" /><path d="M98.10 124.60L40.50 182.20M240.90 124.60L298.50 182.20" stroke="#9a1ed6" stroke-width="1.1" fill="none" /><path d="M39.80 283.40L67.10 310.70M299.40 283.40L272.10 310.70" stroke="#14a886" stroke-width="1.0" fill="none" /><path d="M100.10 125.10L239.10 125.10" stroke="#5a6ad8" stroke-width="0.9" fill="none" opacity=".7"/><rect x="100.50" y="120.20" width="138.6" height="3.6" fill="#096a38"/><path d="M100.50 120.60L239.10 120.60M100.50 123.40L239.10 123.40" stroke="#11a456" stroke-width="0.9" fill="none" /><path d="M109.60 120.20L109.60 123.80M125.60 120.20L125.60 123.80M141.60 120.20L141.60 123.80M157.60 120.20L157.60 123.80M173.60 120.20L173.60 123.80M189.60 120.20L189.60 123.80M205.60 120.20L205.60 123.80M221.60 120.20L221.60 123.80M237.60 120.20L237.60 123.80" stroke="#1fd070" stroke-width="0.8" fill="none" /><rect x="69.90" y="312.00" width="199" height="3.8" fill="#096a38"/><path d="M69.90 312.40L268.90 312.40M69.90 315.40L268.90 315.40" stroke="#11a456" stroke-width="0.9" fill="none" /><path d="M77.60 312.00L77.60 315.80M93.60 312.00L93.60 315.80M109.60 312.00L109.60 315.80M125.60 312.00L125.60 315.80M141.60 312.00L141.60 315.80M157.60 312.00L157.60 315.80M173.60 312.00L173.60 315.80M189.60 312.00L189.60 315.80M205.60 312.00L205.60 315.80M221.60 312.00L221.60 315.80M237.60 312.00L237.60 315.80M253.60 312.00L253.60 315.80" stroke="#1fd070" stroke-width="0.8" fill="none" /><path d="M99.70 116.30L142.90 116.30M179.10 116.30L238.70 116.30M68.70 320.10L270.10 320.10" stroke="#0e9a50" stroke-width="2.8" fill="none" stroke-linecap="round"/><path d="M99.70 116.30L142.90 116.30M179.10 116.30L238.70 116.30M68.70 320.10L270.10 320.10" stroke="#075a2e" stroke-width="1.3" fill="none" stroke-dasharray="3 1.4"/><rect x="28.50" y="182.40" width="11" height="101" fill="#063c20"/><rect x="299.70" y="182.40" width="11.2" height="101" fill="#0a6236"/><path d="M29.30 182.60L29.30 284.60" stroke="#14b860" stroke-width="1.0" fill="none" /><path d="M36.70 182.60L36.70 284.60" stroke="#14b860" stroke-width="1.0" fill="none" /><path d="M39.50 182.60L39.50 284.60" stroke="#14b860" stroke-width="1.0" fill="none" /><path d="M300.50 182.60L300.50 284.60" stroke="#12a858" stroke-width="0.9" fill="none" /><path d="M302.70 182.60L302.70 284.60" stroke="#12a858" stroke-width="0.9" fill="none" /><path d="M308.30 182.60L308.30 284.60" stroke="#12a858" stroke-width="0.9" fill="none" /><path d="M310.30 182.60L310.30 284.60" stroke="#12a858" stroke-width="0.9" fill="none" /><path d="M28.70 185.00L31.70 185.00M34.90 185.00L39.10 185.00M28.70 191.60L31.70 191.60M34.90 191.60L39.10 191.60M28.70 198.20L31.70 198.20M34.90 198.20L39.10 198.20M28.70 204.80L31.70 204.80M34.90 204.80L39.10 204.80M28.70 211.40L31.70 211.40M34.90 211.40L39.10 211.40M28.70 218.00L31.70 218.00M34.90 218.00L39.10 218.00M28.70 224.60L31.70 224.60M34.90 224.60L39.10 224.60M28.70 231.20L31.70 231.20M34.90 231.20L39.10 231.20M28.70 237.80L31.70 237.80M34.90 237.80L39.10 237.80M28.70 244.40L31.70 244.40M34.90 244.40L39.10 244.40M28.70 251.00L31.70 251.00M34.90 251.00L39.10 251.00M28.70 257.60L31.70 257.60M34.90 257.60L39.10 257.60M28.70 264.20L31.70 264.20M34.90 264.20L39.10 264.20M28.70 270.80L31.70 270.80M34.90 270.80L39.10 270.80M28.70 277.40L31.70 277.40M34.90 277.40L39.10 277.40M28.70 284.00L31.70 284.00M34.90 284.00L39.10 284.00M301.10 187.00L304.10 187.00M307.10 187.00L310.50 187.00M301.10 193.60L304.10 193.60M307.10 193.60L310.50 193.60M301.10 200.20L304.10 200.20M307.10 200.20L310.50 200.20M301.10 206.80L304.10 206.80M307.10 206.80L310.50 206.80M301.10 213.40L304.10 213.40M307.10 213.40L310.50 213.40M301.10 220.00L304.10 220.00M307.10 220.00L310.50 220.00M301.10 226.60L304.10 226.60M307.10 226.60L310.50 226.60M301.10 233.20L304.10 233.20M307.10 233.20L310.50 233.20M301.10 239.80L304.10 239.80M307.10 239.80L310.50 239.80M301.10 246.40L304.10 246.40M307.10 246.40L310.50 246.40M301.10 253.00L304.10 253.00M307.10 253.00L310.50 253.00M301.10 259.60L304.10 259.60M307.10 259.60L310.50 259.60M301.10 266.20L304.10 266.20M307.10 266.20L310.50 266.20M301.10 272.80L304.10 272.80M307.10 272.80L310.50 272.80M301.10 279.40L304.10 279.40M307.10 279.40L310.50 279.40" stroke="#1cd070" stroke-width="0.8" fill="none" /><path d="M26.10 181.80L312.50 181.80" stroke="#8c8412" stroke-width="1.25" fill="none" /><path d="M39.60 181.80L101.60 181.80M237.60 181.80L299.60 181.80" stroke="#b87c64" stroke-width="1.15" fill="none" opacity=".8"/><path d="M101.60 181.80L237.60 181.80" stroke="#7ad048" stroke-width="1.2" fill="none" opacity=".8"/><path d="M26.10 218.30L312.50 218.30" stroke="#a8c4b4" stroke-width="0.9" fill="none" opacity=".7"/><path d="M169.70 112.40L169.70 323.70" stroke="#b4c8bc" stroke-width="0.8" fill="none" opacity=".75"/><path d="M95.60 119.40L243.30 119.40L305.40 181.70L305.40 285.60L274.40 316.60L64.40 316.60L33.30 285.60L33.30 181.70Z" stroke="#bcbcbc" stroke-width="1.0" fill="none" /><path d="M33.30 183.00L33.30 284.00M305.40 183.00L305.40 284.00" stroke="#c4e0d0" stroke-width="1.1" fill="none" opacity=".75"/><path d="M15.17 158.39L73.75 99.96" stroke="#063e1e" stroke-width="2.5" fill="none"/><path d="M18.10 162.18L77.67 102.76" stroke="#063e1e" stroke-width="2.0" fill="none"/><path d="M20.08 164.16L79.65 104.74" stroke="#063e1e" stroke-width="2.0" fill="none"/><path d="M14.22 157.44L72.80 99.00M16.06 159.28L74.63 100.84M17.47 161.54L77.04 102.12M18.88 162.96L78.45 103.54M19.52 163.60L79.08 104.17M20.93 165.01L80.50 105.59" stroke="#1cc86c" stroke-width="0.9" fill="none" stroke-linecap="round"/><path d="M14.22 157.44L72.80 99.00M16.06 159.28L74.63 100.84M17.47 161.54L77.04 102.12M18.88 162.96L78.45 103.54M19.52 163.60L79.08 104.17M20.93 165.01L80.50 105.59" stroke="#2ee088" stroke-width="0.7" fill="none" stroke-dasharray="1 2.6" opacity=".5"/><path d="M14.85 162.60L76.40 101.20" stroke="#e6fff0" stroke-width="1.2" fill="none" /><path d="M324.08 158.39L265.55 99.96" stroke="#063e1e" stroke-width="2.5" fill="none"/><path d="M321.15 162.18L261.63 102.76" stroke="#063e1e" stroke-width="2.0" fill="none"/><path d="M319.17 164.16L259.65 104.74" stroke="#063e1e" stroke-width="2.0" fill="none"/><path d="M325.03 157.44L266.50 99.01M323.20 159.28L264.67 100.85M321.78 161.54L262.26 102.12M320.37 162.96L260.85 103.54M319.73 163.59L260.22 104.17M318.32 165.01L258.80 105.59" stroke="#1cc86c" stroke-width="0.9" fill="none" stroke-linecap="round"/><path d="M325.03 157.44L266.50 99.01M323.20 159.28L264.67 100.85M321.78 161.54L262.26 102.12M320.37 162.96L260.85 103.54M319.73 163.59L260.22 104.17M318.32 165.01L258.80 105.59" stroke="#2ee088" stroke-width="0.7" fill="none" stroke-dasharray="1 2.6" opacity=".5"/><path d="M324.40 162.60L262.90 101.20" stroke="#e6fff0" stroke-width="1.2" fill="none" /><path d="M41.39 335.06L13.15 306.55" stroke="#063e1e" stroke-width="2.5" fill="none"/><path d="M45.19 332.15L15.96 302.63" stroke="#063e1e" stroke-width="2.0" fill="none"/><path d="M47.18 330.17L17.95 300.66" stroke="#063e1e" stroke-width="2.0" fill="none"/><path d="M40.44 336.01L12.19 307.50M42.28 334.18L14.04 305.67M44.55 332.78L15.32 303.27M45.97 331.37L16.74 301.86M46.61 330.74L17.38 301.23M48.03 329.33L18.80 299.82" stroke="#1cc86c" stroke-width="0.9" fill="none" stroke-linecap="round"/><path d="M40.44 336.01L12.19 307.50M42.28 334.18L14.04 305.67M44.55 332.78L15.32 303.27M45.97 331.37L16.74 301.86M46.61 330.74L17.38 301.23M48.03 329.33L18.80 299.82" stroke="#2ee088" stroke-width="0.7" fill="none" stroke-dasharray="1 2.6" opacity=".5"/><path d="M45.60 335.40L14.40 303.90" stroke="#e6fff0" stroke-width="1.2" fill="none" /><path d="M297.51 334.96L325.65 306.55" stroke="#063e1e" stroke-width="2.5" fill="none"/><path d="M293.71 332.05L322.84 302.63" stroke="#063e1e" stroke-width="2.0" fill="none"/><path d="M291.72 330.07L320.85 300.66" stroke="#063e1e" stroke-width="2.0" fill="none"/><path d="M298.46 335.91L326.61 307.50M296.62 334.08L324.76 305.67M294.35 332.68L323.48 303.27M292.93 331.27L322.06 301.86M292.29 330.64L321.42 301.23M290.87 329.23L320.00 299.82" stroke="#1cc86c" stroke-width="0.9" fill="none" stroke-linecap="round"/><path d="M298.46 335.91L326.61 307.50M296.62 334.08L324.76 305.67M294.35 332.68L323.48 303.27M292.93 331.27L322.06 301.86M292.29 330.64L321.42 301.23M290.87 329.23L320.00 299.82" stroke="#2ee088" stroke-width="0.7" fill="none" stroke-dasharray="1 2.6" opacity=".5"/><path d="M293.30 335.30L324.40 303.90" stroke="#e6fff0" stroke-width="1.2" fill="none" /><rect x="91.90" y="135.10" width="4.2" height="6.6" fill="none" stroke="#b08a60" stroke-width=".7"/><rect x="101.30" y="135.10" width="8" height="6.6" fill="none" stroke="#a05a58" stroke-width=".7"/><rect x="96.30" y="135.10" width="4.6" height="6.6" fill="none" stroke="#3a5ac0" stroke-width=".7"/><rect x="221.50" y="259.60" width="7.6" height="6.6" fill="none" stroke="#10a8a0" stroke-width=".7"/><path d="M293.50 401.60L293.50 368.50M293.50 401.60L327.40 401.60" stroke="#dcd40c" stroke-width="0.75" fill="none" /><path d="M292.40 375.50L293.50 368.00L294.60 375.50Z" fill="#e8e010"/><path d="M319.10 400.60L327.70 401.60L319.10 402.60Z" fill="#e8e010"/><text x="295.10" y="365.00" font-size="5.6" fill="#e8e010" text-anchor="middle" font-family="Liberation Sans,sans-serif">z</text><text x="332.30" y="400.00" font-size="5.6" fill="#e8e010" text-anchor="middle" font-family="Liberation Sans,sans-serif">Y</text><path d="M19.30 399.80L33.10 399.80L39.40 406.00L39.40 415.80L36.50 418.90L16.10 418.90L13.00 415.80L13.00 406.00Z" fill="none" stroke="#b4b4b4" stroke-width="1"/><text x="10.10" y="398.80" font-size="5.6" fill="#b4b4b4" text-anchor="middle" font-family="Liberation Sans,sans-serif">E</text><text x="26.10" y="398.80" font-size="5.6" fill="#b4b4b4" text-anchor="middle" font-family="Liberation Sans,sans-serif">A</text><text x="43.10" y="398.80" font-size="5.6" fill="#b4b4b4" text-anchor="middle" font-family="Liberation Sans,sans-serif">H</text><text x="9.60" y="411.70" font-size="5.6" fill="#b4b4b4" text-anchor="middle" font-family="Liberation Sans,sans-serif">F</text><text x="42.60" y="411.70" font-size="5.6" fill="#b4b4b4" text-anchor="middle" font-family="Liberation Sans,sans-serif">J</text><text x="10.10" y="424.70" font-size="5.6" fill="#b4b4b4" text-anchor="middle" font-family="Liberation Sans,sans-serif">G</text><text x="26.60" y="424.70" font-size="5.6" fill="#b4b4b4" text-anchor="middle" font-family="Liberation Sans,sans-serif">C</text><text x="43.10" y="424.70" font-size="5.6" fill="#b4b4b4" text-anchor="middle" font-family="Liberation Sans,sans-serif">K</text></svg>
</div></div></body></html>
